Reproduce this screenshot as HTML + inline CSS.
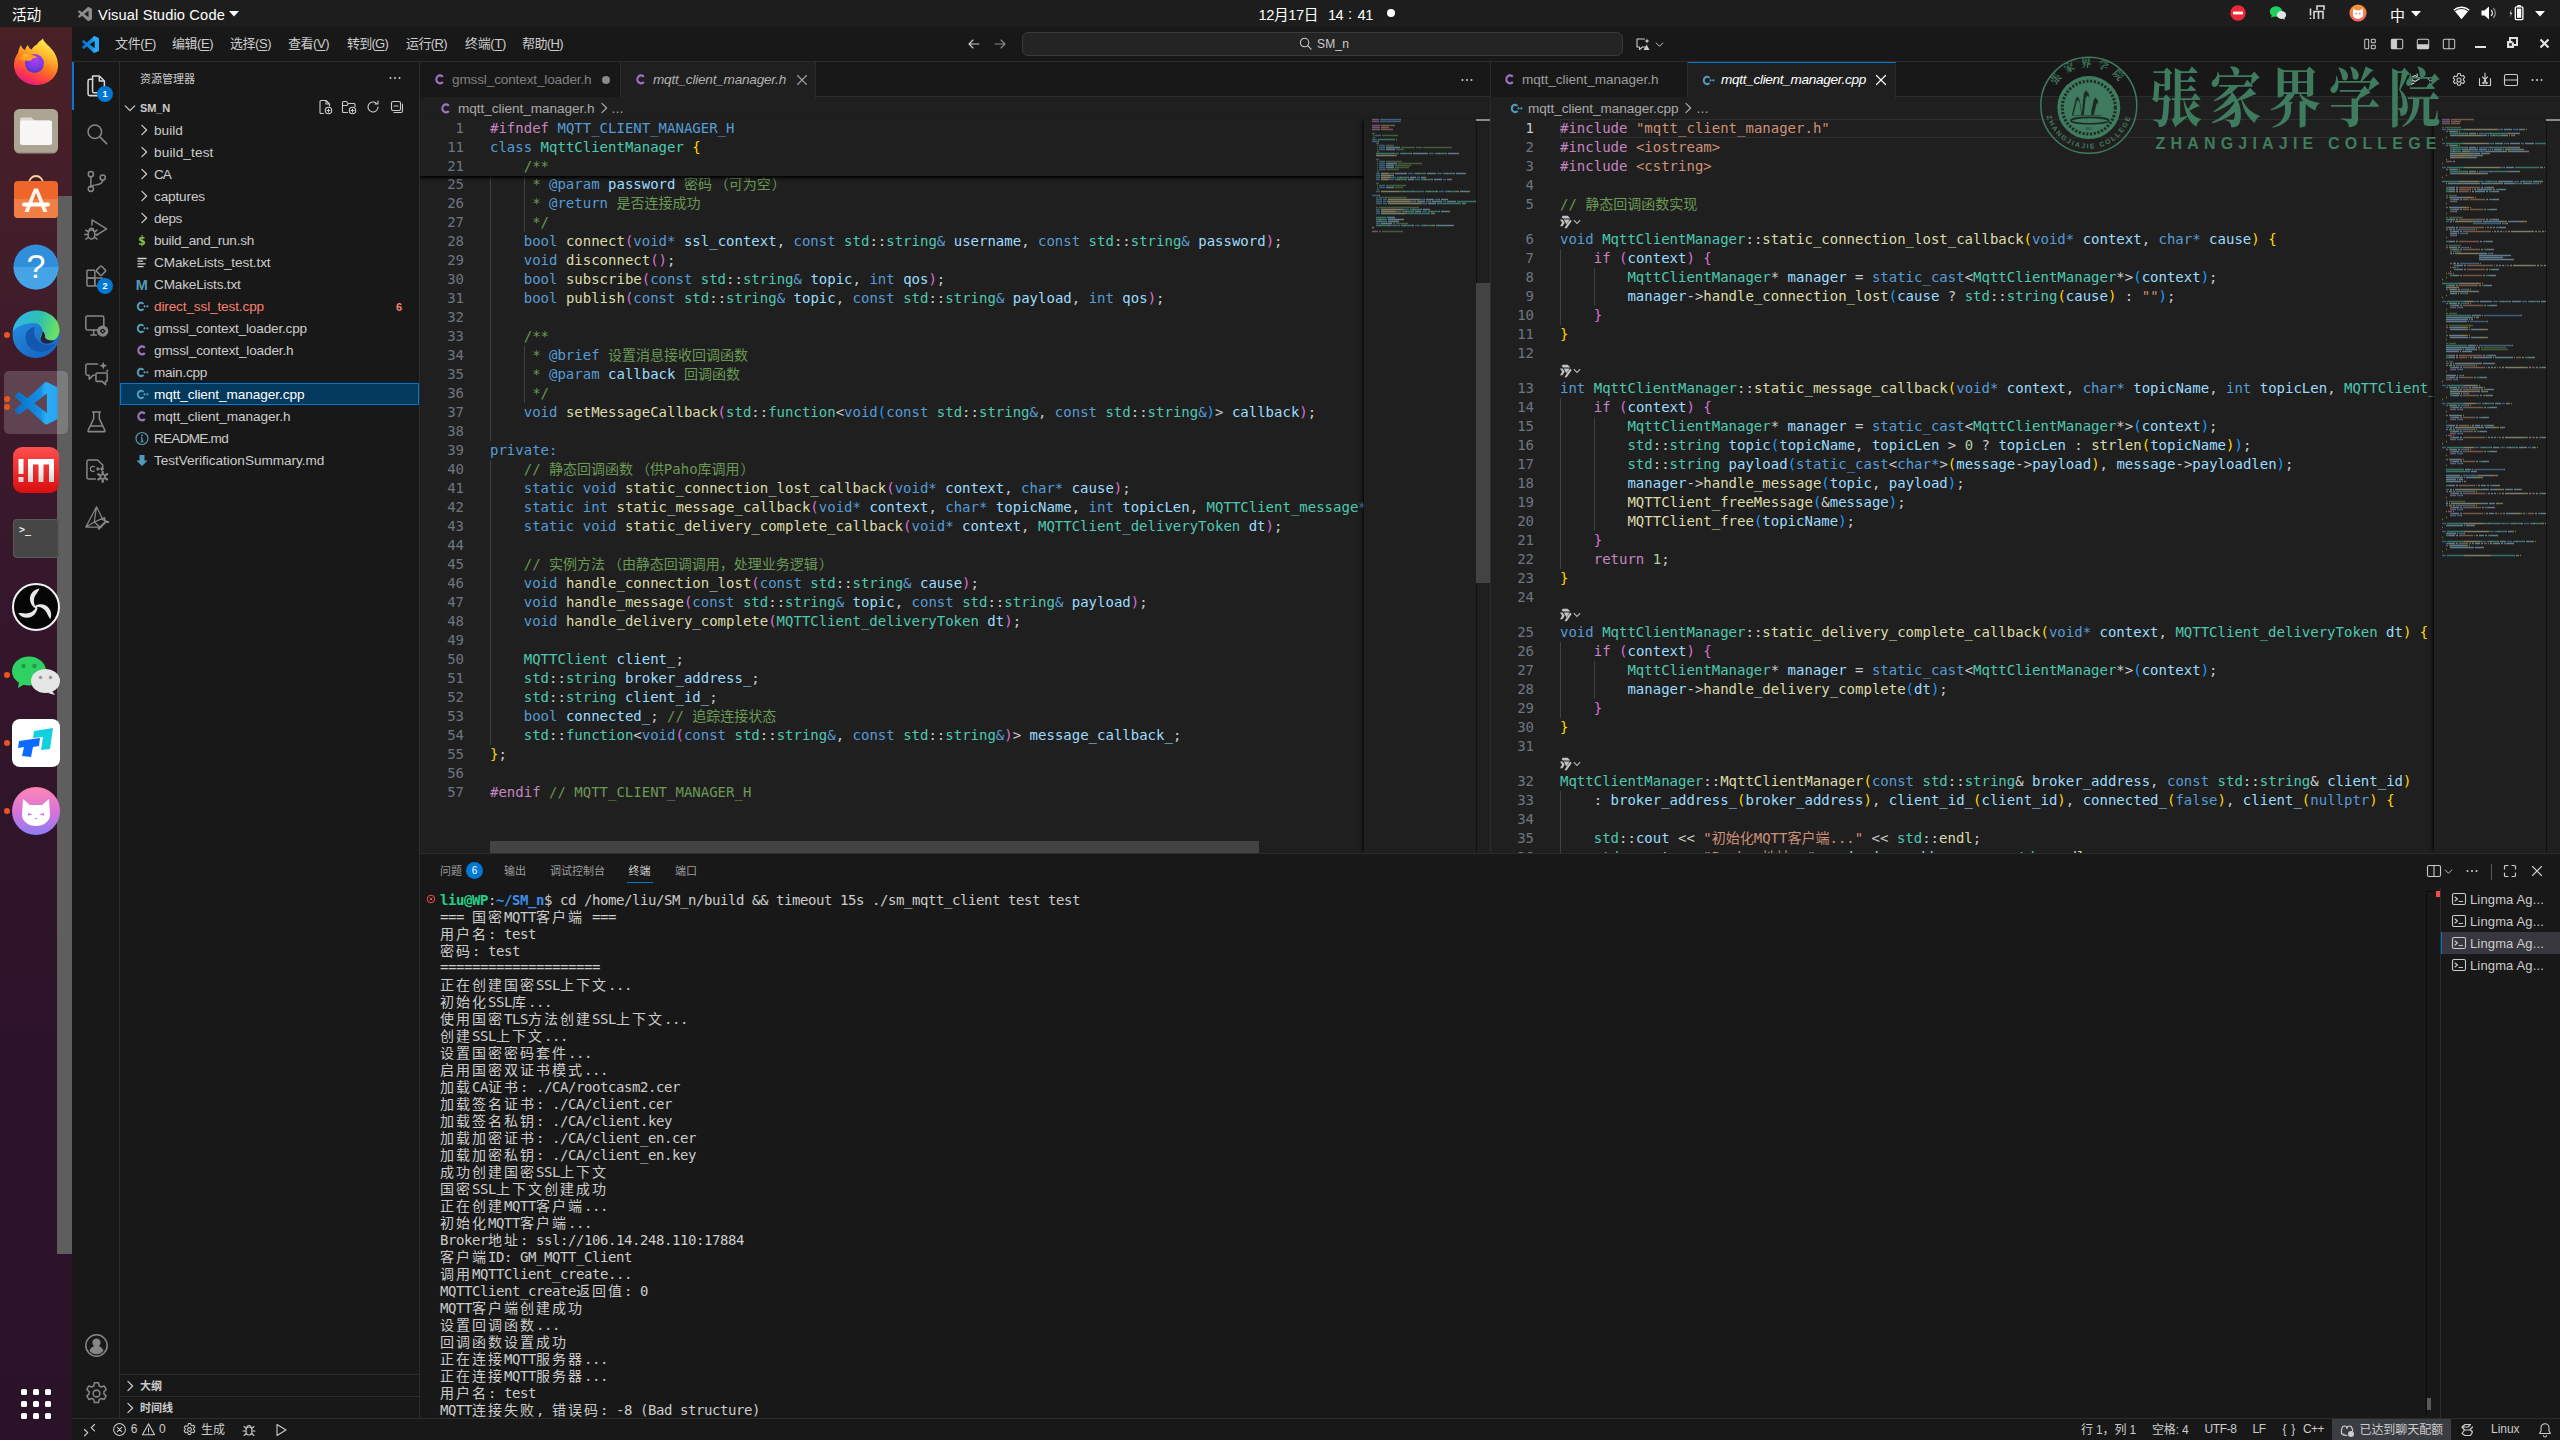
<!DOCTYPE html>
<html lang="zh-CN"><head><meta charset="utf-8"><title>Visual Studio Code</title>
<style>
*{box-sizing:border-box;margin:0;padding:0}
html,body{width:2561px;height:1441px;overflow:hidden;background:#fff}
body{font-family:"Liberation Sans","Noto Sans CJK SC",sans-serif;font-size:13px;color:#ccc;position:relative}
.abs{position:absolute}
#screen{position:absolute;left:0;top:0;width:2560px;height:1440px;background:#181818;overflow:hidden}
#topbar{position:absolute;left:0;top:0;width:2560px;height:27px;background:#1d1d1d;color:#fff;font-size:14.5px}
#topbar .tb{position:absolute;top:1.5px;line-height:27px;white-space:nowrap}
#dock{position:absolute;left:0;top:27px;width:72px;height:1413px;background:linear-gradient(180deg,#482026 0%,#421d2a 17%,#36172b 38%,#2f142a 60%,#2a1229 100%)}
#dockgrey{position:absolute;left:57px;top:169px;width:15px;height:1058px;background:#5e5e5e}
.dk{position:absolute;left:12px;width:48px;height:48px}
.dot{position:absolute;left:4px;width:6px;height:6px;border-radius:50%;background:#e95420}
#vs{position:absolute;left:72px;top:27px;width:2488px;height:1413px;background:#181818}
#title{position:absolute;left:0;top:0;width:2488px;height:35px;border-bottom:1px solid #2b2b2b;background:#181818}
.menu{position:absolute;top:0;line-height:34px;font-size:13px;color:#ccc;white-space:nowrap}
.menu u{text-decoration:underline;text-underline-offset:2px}
#cmd{position:absolute;left:950px;top:5px;width:601px;height:24px;border:1px solid #3a3a3a;border-radius:6px;background:#242424}
#act{position:absolute;left:0;top:35px;width:48px;height:1356px;border-right:1px solid #2b2b2b;background:#181818}
.ai{position:absolute;left:12px;width:24px;height:24px}
.badge{position:absolute;width:16px;height:16px;border-radius:8px;background:#0078d4;color:#fff;font-size:9px;font-weight:bold;text-align:center;line-height:16px}
#side{position:absolute;left:48px;top:35px;width:300px;height:1356px;border-right:1px solid #2b2b2b;background:#181818}
.row{position:absolute;left:0;width:299px;height:22px;line-height:22px;white-space:nowrap;font-size:13px;color:#ccc;letter-spacing:.25px}
.row .lbl{position:absolute;top:1px}
.row .ic{position:absolute;top:3px;width:16px;height:16px}
.mono{font-family:"DejaVu Sans Mono","Noto Sans CJK SC",monospace}
.ed{position:absolute;background:#1f1f1f;overflow:hidden}
.tabs{position:absolute;left:0;top:0;height:35px;background:#181818;border-bottom:1px solid #2b2b2b}
.tab{position:absolute;top:0;height:35px;border-right:1px solid #2b2b2b;line-height:36px;font-size:13px;white-space:nowrap;letter-spacing:.25px}
.tab.act{background:#1f1f1f;height:36px}
.bc{position:absolute;left:0;top:35px;height:22px;line-height:24px;font-size:13px;color:#a9a9a9;white-space:nowrap;letter-spacing:.25px}
.code{position:absolute;font-family:"DejaVu Sans Mono","Noto Sans CJK SC",monospace;font-size:14px;line-height:19px;white-space:pre;color:#ccc}
.ln{position:absolute;left:0;height:19px;white-space:pre}
.num{position:absolute;text-align:right;color:#6e7681;font-family:"DejaVu Sans Mono",monospace;font-size:14px;line-height:19px;height:19px}
.k{color:#569cd6}.c{color:#c586c0}.t{color:#4ec9b0}.f{color:#dcdcaa}.v{color:#9cdcfe}.s{color:#ce9178}.m{color:#6a9955}.n{color:#b5cea8}
.b0{color:#ffd700}.b1{color:#da70d6}.b2{color:#179fff}
.cj{font-family:"Noto Sans CJK SC",sans-serif}
.fwl{display:inline-block;width:16.86px;text-align:right}.fwr{display:inline-block;width:16.86px;padding-left:1px;text-align:left}
.guide{position:absolute;width:1px;background:#404040}
#panel{position:absolute;left:348px;top:826px;width:2140px;height:565px;background:#181818;border-top:1px solid #2b2b2b}
.pt{position:absolute;top:0;height:35px;line-height:35px;font-size:11px;color:#9d9d9d;white-space:nowrap}
.term{position:absolute;left:20px;font-family:"DejaVu Sans Mono","Noto Sans CJK SC",monospace;font-size:14px;line-height:17px;height:17px;white-space:pre;color:#ccc;letter-spacing:-0.43px}
.term .cj{letter-spacing:2px;font-family:"Noto Sans CJK SC",sans-serif}
#status{position:absolute;left:0;top:1391px;width:2488px;height:22px;border-top:1px solid #2b2b2b;background:#181818;font-size:12px;color:#ccc}
#status .s{position:absolute;top:0;line-height:21px;white-space:nowrap;color:#ccc}
svg{display:block;overflow:visible}
</style></head>
<body><div id="screen">
<div id="topbar">
<div class="tb" style="left:12px;font-size:14.67px;letter-spacing:-0.164px;">活动</div>
<svg class="abs" style="left:77.500px;top:6.500px" width="14" height="14" viewBox="0 0 24 24"><path fill="#8c8c8c" d="M23.15 2.587L18.21.21a1.494 1.494 0 0 0-1.705.29l-9.46 8.63-4.12-3.128a.999.999 0 0 0-1.276.057L.327 7.261A1 1 0 0 0 .326 8.74L3.899 12 .326 15.260a1 1 0 0 0 .001 1.479L1.650 17.940a.999.999 0 0 0 1.276.057l4.120-3.128 9.460 8.630a1.492 1.492 0 0 0 1.704.290l4.942-2.377A1.500 1.500 0 0 0 24 20.060V3.939a1.500 1.500 0 0 0-.850-1.352zm-5.146 14.861L10.826 12l7.178-5.448v10.896z"/></svg>
<div class="tb" style="left:98px;font-size:14.67px;letter-spacing:0.144px;">Visual Studio Code</div>
<svg class="abs" style="left:229px;top:11px" width="10" height="6"><path fill="#fff" d="M0 0h10L5 5.5z"/></svg>
<div class="tb" style="left:1258.500px;font-size:14.67px;letter-spacing:-0.404px;">12月17日</div>
<div class="tb" style="left:1328px;font-size:14.67px;letter-spacing:-0.656px;">14</div>
<div class="tb" style="left:1348px;top:0.5px;font-size:14.67px">:</div>
<div class="tb" style="left:1357.500px;font-size:14.67px;letter-spacing:-0.406px;">41</div>
<div class="abs" style="left:1387px;top:9px;width:8px;height:8px;border-radius:50%;background:#fff"></div>
<svg class="abs" style="left:2230px;top:5px" width="16" height="16"><circle cx="8" cy="8" r="7.7" fill="#ed2939"/><rect x="3" y="6.6" width="10" height="2.8" fill="#fff"/></svg>
<svg class="abs" style="left:2269px;top:5px" width="18" height="16"><ellipse cx="7" cy="6.5" rx="6.2" ry="5.3" fill="#1fd15c"/><path d="M3 10l-1 3 3.5-2z" fill="#1fd15c"/><ellipse cx="12.5" cy="10" rx="4.6" ry="3.9" fill="#e4e4e4"/><path d="M15 12.5l1.2 2.3-3-1.2z" fill="#e4e4e4"/></svg>
<svg class="abs" style="left:2309px;top:5px" width="18" height="16" fill="none" stroke="#d8d8d8" stroke-width="1.6"><path d="M1.5 3.5v7M1.5 12.5v1.6" /><path d="M5 14V6.5h9V14M9.5 6.5V14M8 5V1h7v4" /></svg>
<svg class="abs" style="left:2349px;top:4px" width="18" height="18"><defs><linearGradient id="cg" x1="0" y1="0" x2="0" y2="1"><stop offset="0" stop-color="#f79a2c"/><stop offset="1" stop-color="#f2606a"/></linearGradient></defs><circle cx="9" cy="9" r="8.6" fill="url(#cg)"/><path d="M4.2 4.2l2.6 2h4.4l2.6-2 .4 6.2a5.2 4.4 0 0 1-10.4 0z" fill="#fff"/><circle cx="7.2" cy="9.6" r=".8" fill="#f2606a"/><circle cx="10.8" cy="9.6" r=".8" fill="#f2606a"/></svg>
<div class="tb" style="left:2390px;font-size:15px">中</div>
<svg class="abs" style="left:2411px;top:11px" width="10" height="6"><path fill="#fff" d="M0 0h10L5 5.5z"/></svg>
<svg class="abs" style="left:2453px;top:6px" width="17" height="14"><path fill="#fff" d="M8.5 13.2L.4 3.6a12.5 12.5 0 0 1 16.2 0z"/><path fill="none" stroke="#1d1d1d" stroke-width="1.1" d="M1.8 4.9a10.5 10.5 0 0 1 13.4 0"/></svg>
<svg class="abs" style="left:2481px;top:6px" width="17" height="14"><path fill="#fff" d="M.5 4.5h3L8 .6v12.8L3.5 9.5h-3z"/><path fill="none" stroke="#fff" stroke-width="1.2" d="M10.2 4.2a4 4 0 0 1 0 5.6"/><path fill="none" stroke="#9a9a9a" stroke-width="1.2" d="M12.4 2.2a7 7 0 0 1 0 9.6"/></svg>
<svg class="abs" style="left:2509px;top:4px" width="16" height="18"><path fill="#c9c9c9" d="M2.4 5.2L.6 10h1.3l-.7 3.6L3.4 8.4H2z"/><rect x="6.3" y="2.8" width="7.6" height="12.8" rx="1.2" fill="none" stroke="#fff" stroke-width="1.3"/><rect x="8.4" y="1" width="3.4" height="1.6" fill="#fff"/><rect x="8" y="4.6" width="4.2" height="9.2" fill="#fff"/></svg>
<svg class="abs" style="left:2535px;top:11px" width="10" height="6"><path fill="#fff" d="M0 0h10L5 5.5z"/></svg>
</div>
<div id="dock"><div id="dockgrey"></div>
<svg class="dk" style="top:11px" viewBox="0 0 48 48"><defs><linearGradient id="ff1" x1=".75" y1="0" x2=".3" y2="1"><stop offset="0" stop-color="#fff25a"/><stop offset=".3" stop-color="#ffbd2e"/><stop offset=".55" stop-color="#ff7a1f"/><stop offset=".8" stop-color="#ff3b4a"/><stop offset="1" stop-color="#e31587"/></linearGradient><radialGradient id="ff2" cx=".55" cy=".3" r=".75"><stop offset="0" stop-color="#b03df0"/><stop offset=".6" stop-color="#7a3ae0"/><stop offset="1" stop-color="#4a35c8"/></radialGradient></defs><path fill="url(#ff1)" d="M31 .5c1 4 5 6 8 10 4 4 7 10 7 17 0 11-9.500 19.500-21.500 19.500S2 38.500 2 27c0-5 1.500-9 4-12 .5-3 1.500-6 3-8 .5 2.500 2 4 4 5 .5-2 1.500-4 3-5 .5 2 1.500 3.500 3.500 4.500 2-3 4-4.500 5.500-5C26 4 29 2.500 31 .5z"/><circle cx="22.500" cy="25.500" r="9.500" fill="url(#ff2)"/><path fill="#ff9f1f" d="M7 21c3-4 10-5.500 15-3.500 1.500.5 3 1.500 3.500 2.500-3-.5-5.500.5-6.500 2.500-4 .5-8 0-12-1.500z"/><path fill="#ffb52e" d="M10 17c2-1 5-1.500 8-1-2 1-3 2-3.500 3.500-1.500-.5-3-1.500-4.500-2.500z"/></svg>
<svg class="dk" style="top:80px" viewBox="0 0 48 48"><rect x="2" y="2.500" width="44" height="44" rx="5.500" fill="#9a9283"/><rect x="2" y="2" width="44" height="43" rx="5.500" fill="#ada594"/><path d="M8 12.500a2 2 0 0 1 2-2h9.500l3 3H38a2 2 0 0 1 2 2V24H8z" fill="#dedad2"/><rect x="8" y="13.500" width="32" height="24.500" rx="2.500" fill="#f9f7f5"/></svg>
<svg class="dk" style="top:147px" viewBox="0 0 48 48"><path d="M17 9.500a7 7.500 0 0 1 14 0" fill="none" stroke="#f6d3a6" stroke-width="1.800"/><rect x="2" y="7" width="44" height="37" rx="4" fill="#ef662a"/><path d="M2 25h44v15a4 4 0 0 1-4 4H6a4 4 0 0 1-4-4z" fill="#f07e47"/><path d="M12.500 38L22 14.500h4L35.500 38h-4.200L24 19 16.700 38z" fill="#fdf3ee"/><rect x="10" y="28.500" width="28" height="4" rx="2" fill="#fff"/></svg>
<svg class="dk" style="top:216px" viewBox="0 0 48 48"><circle cx="24" cy="24" r="22.5" fill="#2f8fdb"/><path d="M1.5 24a22.5 22.5 0 0 0 45 0z" fill="#46a3e6"/><text x="24" y="35" font-family="Liberation Sans,sans-serif" font-size="34" fill="#fff" text-anchor="middle">?</text></svg>
<svg class="dk" style="top:283px" viewBox="0 0 48 48"><defs><linearGradient id="eg1" x1="0" y1=".3" x2="1" y2=".5"><stop offset="0" stop-color="#2eb4ee"/><stop offset=".55" stop-color="#2fc0b0"/><stop offset="1" stop-color="#6fe35c"/></linearGradient><linearGradient id="eg2" x1="0" y1="0" x2=".6" y2="1"><stop offset="0" stop-color="#2a93e4"/><stop offset="1" stop-color="#1668c4"/></linearGradient></defs><circle cx="24" cy="24.500" r="23.500" fill="url(#eg2)"/><path d="M.700 22C2 9.500 12 .500 24.500 .500 37.500 .500 47.500 9.500 47.500 20c0 7-5 11.500-11 11.500-5 0-8.500-2-8.500-4.500 0-1.500 2.500-2.500 2.500-6 0-4.500-4-8-9-8C12.500 13 4 16.500 .700 22z" fill="url(#eg1)"/><path d="M13.500 27c0-5.500 4-9.500 9.500-10-2.500 6 .5 13 6.500 16.500 4.500 2.500 10 2.500 14-.5-4.500 8-14 11-21.500 7.500-5.500-2.500-8.500-8-8.500-13.500z" fill="#1358ae"/><path d="M28.500 27.500c.5-1.500 2-3 2-6.500 2 1.500 3 4 2.500 6.500 1.500 2.500 6 3.500 9.500 2.500-2 3-7 4.500-11 3-2-1-3.500-3-3-5.500z" fill="#2a1f3a"/></svg>
<div class="dot" style="top:305px"></div>
<div class="abs" style="left:4px;top:344px;width:64px;height:63px;border-radius:5px;background:rgba(255,255,255,.18)"></div>
<svg class="abs" style="left:14.500px;top:355px" width="42.500" height="42.500" viewBox="0 0 24 24"><defs><linearGradient id="vg" x1="0" y1="0" x2="1" y2="0"><stop offset="0" stop-color="#0a6fc4"/><stop offset=".6" stop-color="#1590e6"/><stop offset=".72" stop-color="#2badf8"/><stop offset="1" stop-color="#26a5f2"/></linearGradient></defs><path fill="url(#vg)" d="M23.15 2.587L18.21.21a1.494 1.494 0 0 0-1.705.29l-9.46 8.63-4.12-3.128a.999.999 0 0 0-1.276.057L.327 7.261A1 1 0 0 0 .326 8.74L3.899 12 .326 15.260a1 1 0 0 0 .001 1.479L1.650 17.940a.999.999 0 0 0 1.276.057l4.120-3.128 9.460 8.630a1.492 1.492 0 0 0 1.704.290l4.942-2.377A1.500 1.500 0 0 0 24 20.060V3.939a1.500 1.500 0 0 0-.850-1.352zm-5.146 14.861L10.826 12l7.178-5.448v10.896z"/></svg>
<div class="dot" style="top:369px"></div><div class="dot" style="top:377px"></div>
<svg class="dk" style="top:419px" viewBox="0 0 48 48"><defs><linearGradient id="rg" x1="0" y1="0" x2="0" y2="1"><stop offset="0" stop-color="#ff4f4f"/><stop offset="1" stop-color="#d90d0d"/></linearGradient></defs><rect x="1" y="1" width="46" height="46" rx="9" fill="url(#rg)"/><linearGradient id="wg" x1="0" y1="0" x2="0" y2="1"><stop offset=".3" stop-color="#fff"/><stop offset="1" stop-color="#cfcfcf"/></linearGradient><path fill="url(#wg)" d="M6.500 13h5v15h-5zM6.500 31h5v5h-5zM16 13h26v23h-5V18.500h-5.500V36h-5V18.500H21V36h-5z"/></svg>
<svg class="dk" style="top:487px" viewBox="0 0 48 48"><rect x="1" y="5" width="46" height="39" rx="4" fill="#3d3d3d"/><rect x="1.5" y="5.500" width="45" height="38" rx="3.500" fill="#464646" stroke="#5a5a5a"/><text x="7" y="19" font-family="DejaVu Sans Mono,monospace" font-size="10" font-weight="bold" fill="#e8e8e8">&gt;_</text></svg>
<svg class="dk" style="top:556px" viewBox="0 0 48 48"><circle cx="24" cy="24" r="23" fill="#050505" stroke="#f4f4f4" stroke-width="2"/><g fill="#e9e9e9"><path d="M27.500 5.500c-8 1-12 9-8 16 1.500 2.500 4 4 6.500 4.500-5-3.500-5.500-11 -1-16 1-1.500 2-3 2.500-4.500z"/><path d="M27.500 5.500c-8 1-12 9-8 16 1.500 2.500 4 4 6.500 4.500-5-3.500-5.500-11 -1-16 1-1.500 2-3 2.500-4.500z" transform="rotate(120 24 24)"/><path d="M27.500 5.500c-8 1-12 9-8 16 1.500 2.500 4 4 6.500 4.500-5-3.500-5.500-11 -1-16 1-1.500 2-3 2.500-4.500z" transform="rotate(240 24 24)"/></g></svg>
<svg class="dk" style="top:624px" viewBox="0 0 48 48"><ellipse cx="17" cy="20" rx="17" ry="14.500" fill="#2ed162"/><path d="M7 31l-1 6 7-4z" fill="#2ed162"/><circle cx="11.500" cy="15" r="2.200" fill="#1f9a47"/><circle cx="22.500" cy="15" r="2.200" fill="#1f9a47"/><ellipse cx="33.500" cy="30" rx="14.500" ry="12" fill="#e6e6e6"/><path d="M40 40l3 4-7-2z" fill="#e6e6e6"/><circle cx="28.500" cy="26.500" r="1.800" fill="#9b9b9b"/><circle cx="38.500" cy="26.500" r="1.800" fill="#9b9b9b"/></svg>
<div class="dot" style="top:645px"></div>
<svg class="dk" style="top:692px" viewBox="0 0 48 48"><rect width="48" height="48" rx="8" fill="#fff"/><path d="M22 12l19-3-3 21-9 1 2-13-10 1z" fill="#12d0e0"/><path d="M7 22l21-3-1 8-6 1-2 10-9-1 2-9-6 1z" fill="#0a6cff"/></svg>
<div class="dot" style="top:713px"></div>
<svg class="dk" style="top:760px" viewBox="0 0 48 48"><defs><linearGradient id="ct" x1="0" y1="0" x2="0" y2="1"><stop offset="0" stop-color="#ff86b4"/><stop offset=".5" stop-color="#d974d8"/><stop offset="1" stop-color="#8e7bf6"/></linearGradient></defs><circle cx="24" cy="24" r="24" fill="url(#ct)"/><path d="M11 12l7 6h12l7-6 1 16a14 11 0 0 1-28 0z" fill="#fff"/><path d="M16 26l5 1.500-5 1zM32 26l-5 1.500 5 1zM22.500 31h3l-1.500 1.500z" fill="#c96fe0"/></svg>
<div class="dot" style="top:781px"></div>
<svg class="abs" style="left:21px;top:1362px" width="30" height="30"><rect x="0" y="0" width="6" height="6" rx="1.500" fill="#fff"/><rect x="12" y="0" width="6" height="6" rx="1.500" fill="#fff"/><rect x="24" y="0" width="6" height="6" rx="1.500" fill="#fff"/><rect x="0" y="12" width="6" height="6" rx="1.500" fill="#fff"/><rect x="12" y="12" width="6" height="6" rx="1.500" fill="#fff"/><rect x="24" y="12" width="6" height="6" rx="1.500" fill="#fff"/><rect x="0" y="24" width="6" height="6" rx="1.500" fill="#fff"/><rect x="12" y="24" width="6" height="6" rx="1.500" fill="#fff"/><rect x="24" y="24" width="6" height="6" rx="1.500" fill="#fff"/></svg>
</div>
<div id="vs">
<div id="title">
<svg class="abs" style="left:10px;top:9px" width="17" height="17" viewBox="0 0 24 24"><defs><linearGradient id="vg2" x1="0" y1="0" x2="1" y2="0"><stop offset="0" stop-color="#0a6fc4"/><stop offset=".6" stop-color="#1590e6"/><stop offset=".72" stop-color="#2badf8"/><stop offset="1" stop-color="#26a5f2"/></linearGradient></defs><path fill="url(#vg2)" d="M23.15 2.587L18.21.21a1.494 1.494 0 0 0-1.705.29l-9.46 8.63-4.12-3.128a.999.999 0 0 0-1.276.057L.327 7.261A1 1 0 0 0 .326 8.74L3.899 12 .326 15.260a1 1 0 0 0 .001 1.479L1.650 17.940a.999.999 0 0 0 1.276.057l4.120-3.128 9.460 8.630a1.492 1.492 0 0 0 1.704.290l4.942-2.377A1.500 1.500 0 0 0 24 20.060V3.939a1.500 1.500 0 0 0-.850-1.352zm-5.146 14.861L10.826 12l7.178-5.448v10.896z"/></svg>
<div class="menu" style="left:43px;font-size:13px;letter-spacing:-0.322px;">文件(<u>F</u>)</div>
<div class="menu" style="left:100px;font-size:13px;letter-spacing:-0.469px;">编辑(<u>E</u>)</div>
<div class="menu" style="left:158px;font-size:13px;letter-spacing:-0.469px;">选择(<u>S</u>)</div>
<div class="menu" style="left:216px;font-size:13px;letter-spacing:-0.469px;">查看(<u>V</u>)</div>
<div class="menu" style="left:275px;font-size:13px;letter-spacing:-0.756px;">转到(<u>G</u>)</div>
<div class="menu" style="left:334px;font-size:13px;letter-spacing:-0.609px;">运行(<u>R</u>)</div>
<div class="menu" style="left:393px;font-size:13px;letter-spacing:-0.322px;">终端(<u>T</u>)</div>
<div class="menu" style="left:450px;font-size:13px;letter-spacing:-0.609px;">帮助(<u>H</u>)</div>
<svg class="abs" style="left:894px;top:9px" width="16" height="16" viewBox="0 0 16 16" fill="none" stroke="#ccc" stroke-width="1.1" stroke-linecap="round" stroke-linejoin="round" ><path d="M13 8H3M7 4L3 8l4 4"/></svg>
<svg class="abs" style="left:920px;top:9px" width="16" height="16" viewBox="0 0 16 16" fill="none" stroke="#8a8a8a" stroke-width="1.1" stroke-linecap="round" stroke-linejoin="round" ><path d="M3 8h10M9 4l4 4-4 4"/></svg>
<div id="cmd"></div>
<svg class="abs" style="left:1226px;top:9px" width="15" height="15" viewBox="0 0 16 16" fill="none" stroke="#ccc" stroke-width="1.1" stroke-linecap="round" stroke-linejoin="round" ><circle cx="7" cy="7" r="4.500"/><path d="M10.300 10.300L14 14"/></svg>
<div class="menu" style="left:1245px;font-size:12px;font-size:12px;letter-spacing:0.160px;">SM_n</div>
<svg class="abs" style="left:1563px;top:9px" width="16" height="16" viewBox="0 0 16 16" fill="none" stroke="#ccc" stroke-width="1.1" stroke-linecap="round" stroke-linejoin="round" ><path d="M2 3h7.500M2 3v8h2.500v2.500l3-2.500h2"/><path d="M12 2.500l.7 1.800 1.800.7-1.800.7-.7 1.800-.7-1.800-1.800-.7 1.800-.7z" fill="#ccc" stroke="none"/><path d="M11.500 8.500l3 5.500h-6z" fill="#ccc" stroke="none"/></svg>
<svg class="abs" style="left:1582px;top:12px" width="11" height="11" viewBox="0 0 16 16" fill="none" stroke="#ccc" stroke-width="1.4" stroke-linecap="round" stroke-linejoin="round" ><path d="M3.300 5.900l4.700 4.700 4.700-4.700"/></svg>
<svg class="abs" style="left:2291px;top:10px" width="14" height="14" viewBox="0 0 16 16" fill="none" stroke="#ccc" stroke-width="1.15" stroke-linecap="round" stroke-linejoin="round" ><rect x="2" y="2.500" width="4.500" height="11" rx=".8"/><rect x="9.500" y="2.500" width="4.500" height="4" rx=".8"/><rect x="9.500" y="9.500" width="4.500" height="4" rx=".8"/></svg>
<svg class="abs" style="left:2318px;top:10px" width="14" height="14" viewBox="0 0 16 16" fill="none" stroke="#ccc" stroke-width="1.15" stroke-linecap="round" stroke-linejoin="round" ><rect x="1.500" y="2.500" width="13" height="11" rx="1.500"/><path d="M2 3h5.500v10H2z" fill="#ccc"/></svg>
<svg class="abs" style="left:2344px;top:10px" width="14" height="14" viewBox="0 0 16 16" fill="none" stroke="#ccc" stroke-width="1.15" stroke-linecap="round" stroke-linejoin="round" ><rect x="1.500" y="2.500" width="13" height="11" rx="1.500"/><path d="M2 9h12v4H2z" fill="#ccc"/></svg>
<svg class="abs" style="left:2370px;top:10px" width="14" height="14" viewBox="0 0 16 16" fill="none" stroke="#ccc" stroke-width="1.15" stroke-linecap="round" stroke-linejoin="round" ><rect x="1.500" y="2.500" width="13" height="11" rx="1.500"/><path d="M8 2.500v11"/></svg>
<div class="abs" style="left:2403px;top:19px;width:11px;height:2px;background:#e0e0e0"></div>
<svg class="abs" style="left:2434px;top:10px" width="12" height="12" fill="none" stroke="#e0e0e0" stroke-width="2"><path d="M4 4V1h7v7H8"/><rect x="1" y="4" width="7" height="7" stroke="none" fill="#e0e0e0"/><rect x="3.200" y="6.200" width="2.600" height="2.600" fill="#181818" stroke="none"/><rect x="6.500" y="2.500" width="3" height="3" fill="#181818" stroke="none"/></svg>
<svg class="abs" style="left:2467px;top:11px" width="12" height="12" fill="none" stroke="#e6e6e6" stroke-width="2.100"><path d="M1.500 1.500l8 8M9.500 1.500l-8 8"/></svg>
</div>
<div id="act">
<div class="abs" style="left:0;top:0;width:2px;height:48px;background:#0078d4"></div>
<svg class="abs" style="left:10.5px;top:9.5px" width="27" height="27" viewBox="0 0 24 24" fill="none" stroke="#d7d7d7" stroke-width="1.35" stroke-linecap="round" stroke-linejoin="round" ><path d="M8.500 3.500h6l4.500 4.500v9a1.500 1.500 0 0 1-1.500 1.500H10a1.500 1.500 0 0 1-1.500-1.500zM14.500 3.500V8H19"/><path d="M8.500 6.500H6A1.500 1.500 0 0 0 4.500 8v11.500A1.500 1.500 0 0 0 6 21h8a1.500 1.500 0 0 0 1.500-1.500v-1"/></svg>
<svg class="abs" style="left:10.5px;top:57.5px" width="27" height="27" viewBox="0 0 24 24" fill="none" stroke="#868686" stroke-width="1.35" stroke-linecap="round" stroke-linejoin="round" ><circle cx="10.500" cy="10.500" r="6"/><path d="M15 15l6 6"/></svg>
<svg class="abs" style="left:10.5px;top:105.5px" width="27" height="27" viewBox="0 0 24 24" fill="none" stroke="#868686" stroke-width="1.35" stroke-linecap="round" stroke-linejoin="round" ><circle cx="7" cy="5.500" r="2.300"/><circle cx="7" cy="18.500" r="2.300"/><circle cx="17.500" cy="8.500" r="2.300"/><path d="M7 7.800v8.400M17.500 10.800c0 3-3 3.700-6 4.200-2.500.4-4.500 1-4.500 2"/></svg>
<svg class="abs" style="left:10.5px;top:153.5px" width="27" height="27" viewBox="0 0 24 24" fill="none" stroke="#868686" stroke-width="1.35" stroke-linecap="round" stroke-linejoin="round" ><path d="M8 8V3.500l13 8-9 5.500"/><ellipse cx="7.500" cy="16.500" rx="3" ry="4"/><path d="M5.500 13a2 2 0 0 1 4 0M4.500 16.500h-3M4.800 14L2.500 12.500M4.800 19l-2.300 1.500M10.500 16.500h3M10.200 14l2.300-1.500M10.200 19l2.300 1.500"/></svg>
<svg class="abs" style="left:10.5px;top:201.5px" width="27" height="27" viewBox="0 0 24 24" fill="none" stroke="#868686" stroke-width="1.35" stroke-linecap="round" stroke-linejoin="round" ><rect x="3.500" y="5.500" width="7" height="7" rx=".8"/><rect x="3.500" y="12.500" width="7" height="7" rx=".8"/><rect x="10.500" y="12.500" width="7" height="7" rx=".8"/><rect x="12.800" y="2.800" width="6.400" height="6.400" rx=".8" transform="rotate(45 16 6)"/></svg>
<svg class="abs" style="left:10.5px;top:249.5px" width="27" height="27" viewBox="0 0 24 24" fill="none" stroke="#868686" stroke-width="1.35" stroke-linecap="round" stroke-linejoin="round" ><rect x="2.500" y="3.500" width="16" height="12.500" rx="1.500"/><path d="M7 20.500h5M9.500 16v4.500"/><circle cx="17.500" cy="17" r="5" fill="#868686" stroke="none"/><path d="M15.500 17l1.500-1.500M15.500 17l1.500 1.500M19.500 17L18 15.500M19.500 17L18 18.500" stroke="#181818" stroke-width="1.200"/></svg>
<svg class="abs" style="left:10.5px;top:297.5px" width="27" height="27" viewBox="0 0 24 24" fill="none" stroke="#868686" stroke-width="1.35" stroke-linecap="round" stroke-linejoin="round" ><path d="M13 3.500H4A1.500 1.500 0 0 0 2.500 5v7A1.500 1.500 0 0 0 4 13.500h1.500v3.500l3.500-3.500h1"/><path d="M12.500 11.500h8a1 1 0 0 1 1 1v5.500a1 1 0 0 1-1 1H20v3l-3-3h-4.500a1 1 0 0 1-1-1v-5.500a1 1 0 0 1 1-1z"/><path d="M18 1.500l1 2.500 2.500 1-2.500 1-1 2.500-1-2.500-2.500-1 2.500-1z" fill="#868686" stroke="none"/><path d="M21.500 8l.5 1.300 1.300.5-1.300.5-.5 1.300-.5-1.300-1.300-.5 1.300-.5z" fill="#868686" stroke="none"/></svg>
<svg class="abs" style="left:10.5px;top:345.5px" width="27" height="27" viewBox="0 0 24 24" fill="none" stroke="#868686" stroke-width="1.35" stroke-linecap="round" stroke-linejoin="round" ><path d="M8.500 3.500h7M9.500 3.500v6L4.500 20a.7.700 0 0 0 .6 1h13.800a.7.700 0 0 0 .6-1L14.500 9.500v-6M6.500 16h11"/></svg>
<svg class="abs" style="left:10.5px;top:393.5px" width="27" height="27" viewBox="0 0 24 24" fill="none" stroke="#868686" stroke-width="1.35" stroke-linecap="round" stroke-linejoin="round" ><path d="M11 20.500H5A1.500 1.500 0 0 1 3.500 19V5A1.500 1.500 0 0 1 5 3.500h8l4.500 4.500v4"/><path d="M10 9.500a2.300 2.300 0 1 0 0 4M12 11.500h2.500M13.200 10.300v2.400M15.500 11.500H18M16.700 10.300v2.400" stroke-width="1.200"/><circle cx="17.500" cy="18.500" r="2" /><path d="M17.500 14v1.500M17.500 21.500V23M13.600 16.200l1.300.8M20.100 20l1.300.8M13.600 20.800l1.300-.8M20.100 17l1.300-.8" stroke-width="2"/></svg>
<svg class="abs" style="left:10.5px;top:441.5px" width="27" height="27" viewBox="0 0 24 24" fill="none" stroke="#868686" stroke-width="1.35" stroke-linecap="round" stroke-linejoin="round" ><path d="M12 2.500L2.500 20.500h14M12 2.500l6 12M12 2.500l-2 13.500 8-3.500M2.500 20.500L10 16l5 4.500" stroke-width="1.100"/><path d="M14 22l6-6M19 12.500a3 3 0 0 0 3.500 3.500" stroke-width="1.800"/></svg>
<svg class="abs" style="left:10.5px;top:1269.5px" width="27" height="27" viewBox="0 0 24 24" fill="none" stroke="#868686" stroke-width="1.35" stroke-linecap="round" stroke-linejoin="round" ><circle cx="12" cy="12" r="9.500"/><circle cx="12" cy="9.500" r="3" fill="#868686"/><path d="M6.500 16.500a6 6 0 0 1 11 0 7 7 0 0 1-11 0z" fill="#868686"/></svg>
<svg class="abs" style="left:10.5px;top:1317.5px" width="27" height="27" viewBox="0 0 24 24" fill="none" stroke="#868686" stroke-width="1.35" stroke-linecap="round" stroke-linejoin="round" ><circle cx="12" cy="12" r="3"/><path d="M10.200 2.500h3.600l.6 2.700 1.800 1 2.600-.9 1.800 3.100-2 1.900v2l2 1.900-1.800 3.100-2.600-.9-1.800 1-.6 2.700h-3.600l-.6-2.700-1.800-1-2.600.9-1.800-3.100 2-1.900v-2l-2-1.900 1.800-3.100 2.600.9 1.800-1z"/></svg>
<div class="badge" style="left:25px;top:24px">1</div>
<div class="badge" style="left:25px;top:216px">2</div>
</div>
<div id="side">
<div class="abs" style="left:20px;top:0px;line-height:35px;font-size:11px;color:#ccc;font-size:11px;letter-spacing:0.000px;">资源管理器</div>
<svg class="abs" style="left:267px;top:8px" width="16" height="16" viewBox="0 0 16 16" fill="none" stroke="#ccc" stroke-width="1" stroke-linecap="round" stroke-linejoin="round" color="#ccc"><circle cx="3.500" cy="8" r="1" fill="currentColor" stroke="none"/><circle cx="8" cy="8" r="1" fill="currentColor" stroke="none"/><circle cx="12.500" cy="8" r="1" fill="currentColor" stroke="none"/></svg>
<svg class="abs" style="left:2px;top:38px" width="16" height="16" viewBox="0 0 16 16" fill="none" stroke="#ccc" stroke-width="1.2" stroke-linecap="round" stroke-linejoin="round" ><path d="M3.300 5.900l4.700 4.700 4.700-4.700"/></svg>
<div class="abs" style="left:20px;top:35px;line-height:22px;font-size:11px;font-weight:bold;color:#ccc;font-size:11px;letter-spacing:-0.141px;">SM_N</div>
<svg class="abs" style="left:197px;top:37px" width="16" height="16" viewBox="0 0 16 16" fill="none" stroke="#ccc" stroke-width="1.1" stroke-linecap="round" stroke-linejoin="round" ><path d="M9 1.500H4a1 1 0 0 0-1 1v11a1 1 0 0 0 1 1h2.500M9 1.500v3.500h3.500M9 1.500l3.500 3.500v2"/><circle cx="11.500" cy="11.500" r="3.200"/><path d="M11.500 10v3M10 11.500h3"/></svg>
<svg class="abs" style="left:221px;top:37px" width="16" height="16" viewBox="0 0 16 16" fill="none" stroke="#ccc" stroke-width="1.1" stroke-linecap="round" stroke-linejoin="round" ><path d="M6.500 13.500h-4a1 1 0 0 1-1-1v-9a1 1 0 0 1 1-1h3l1.500 2h6a1 1 0 0 1 1 1v2M1.500 6.500h4.500l1.500-2"/><circle cx="11.500" cy="11.500" r="3.200"/><path d="M11.500 10v3M10 11.500h3"/></svg>
<svg class="abs" style="left:245px;top:37px" width="16" height="16" viewBox="0 0 16 16" fill="none" stroke="#ccc" stroke-width="1.1" stroke-linecap="round" stroke-linejoin="round" ><path d="M13 8a5 5 0 1 1-1.600-3.700M13 2v3h-3"/></svg>
<svg class="abs" style="left:269px;top:37px" width="16" height="16" viewBox="0 0 16 16" fill="none" stroke="#ccc" stroke-width="1.1" stroke-linecap="round" stroke-linejoin="round" ><rect x="2.500" y="2.500" width="9" height="9" rx="1.500"/><path d="M5 7h4M13.500 5v7a1.500 1.500 0 0 1-1.500 1.500H5"/></svg>
<div class="row" style="top:57px;">
<svg class="abs" style="left:16px;top:3px" width="16" height="16" viewBox="0 0 16 16" fill="none" stroke="#ccc" stroke-width="1.2" stroke-linecap="round" stroke-linejoin="round" ><path d="M5.900 3.300l4.700 4.700-4.700 4.700"/></svg>
<span class="lbl" style="left:34px;color:#ccc;font-size:13.6px;letter-spacing:0.053px;">build</span>
</div>
<div class="row" style="top:79px;">
<svg class="abs" style="left:16px;top:3px" width="16" height="16" viewBox="0 0 16 16" fill="none" stroke="#ccc" stroke-width="1.2" stroke-linecap="round" stroke-linejoin="round" ><path d="M5.900 3.300l4.700 4.700-4.700 4.700"/></svg>
<span class="lbl" style="left:34px;color:#ccc;font-size:13.6px;letter-spacing:0.130px;">build_test</span>
</div>
<div class="row" style="top:101px;">
<svg class="abs" style="left:16px;top:3px" width="16" height="16" viewBox="0 0 16 16" fill="none" stroke="#ccc" stroke-width="1.2" stroke-linecap="round" stroke-linejoin="round" ><path d="M5.900 3.300l4.700 4.700-4.700 4.700"/></svg>
<span class="lbl" style="left:34px;color:#ccc;font-size:13.6px;letter-spacing:-0.945px;">CA</span>
</div>
<div class="row" style="top:123px;">
<svg class="abs" style="left:16px;top:3px" width="16" height="16" viewBox="0 0 16 16" fill="none" stroke="#ccc" stroke-width="1.2" stroke-linecap="round" stroke-linejoin="round" ><path d="M5.900 3.300l4.700 4.700-4.700 4.700"/></svg>
<span class="lbl" style="left:34px;color:#ccc;font-size:13.6px;letter-spacing:-0.143px;">captures</span>
</div>
<div class="row" style="top:145px;">
<svg class="abs" style="left:16px;top:3px" width="16" height="16" viewBox="0 0 16 16" fill="none" stroke="#ccc" stroke-width="1.2" stroke-linecap="round" stroke-linejoin="round" ><path d="M5.900 3.300l4.700 4.700-4.700 4.700"/></svg>
<span class="lbl" style="left:34px;color:#ccc;font-size:13.6px;letter-spacing:-0.371px;">deps</span>
</div>
<div class="row" style="top:167px;">
<svg class="abs" style="left:14px;top:3px" width="16" height="16" viewBox="0 0 16 16" fill="none" stroke-linecap="butt"><text x="8" y="13" font-size="13" font-weight="bold" font-family="DejaVu Sans Mono,monospace" fill="#8dc149" stroke="none" text-anchor="middle">$</text></svg>
<span class="lbl" style="left:34px;color:#ccc;font-size:13.6px;letter-spacing:-0.270px;">build_and_run.sh</span>
</div>
<div class="row" style="top:189px;">
<svg class="abs" style="left:14px;top:3px" width="16" height="16" viewBox="0 0 16 16" fill="none" stroke-linecap="butt"><path d="M3.500 4.500h9M3.500 7.200h5.500M3.500 9.900h8M3.500 12.600h6" stroke="#d4d7d6" stroke-width="1.300"/></svg>
<span class="lbl" style="left:34px;color:#ccc;font-size:13.6px;letter-spacing:-0.111px;">CMakeLists_test.txt</span>
</div>
<div class="row" style="top:211px;">
<svg class="abs" style="left:14px;top:3px" width="16" height="16" viewBox="0 0 16 16" fill="none" stroke-linecap="butt"><text x="8" y="13.500" font-size="14.500" font-weight="bold" font-family="Liberation Sans,sans-serif" fill="#519aba" stroke="none" text-anchor="middle">M</text></svg>
<span class="lbl" style="left:34px;color:#ccc;font-size:13.6px;letter-spacing:-0.174px;">CMakeLists.txt</span>
</div>
<div class="row" style="top:233px;">
<svg class="abs" style="left:14px;top:3px" width="16" height="16" viewBox="0 0 16 16" fill="none" stroke-linecap="butt"><path d="M9.450 6A3.200 3.700 0 1 0 9.450 10.800" stroke="#519aba" stroke-width="2.100"/><path d="M9.300 8.300h2.400M10.500 7.100v2.400M12.100 8.300h2.400M13.300 7.100v2.400" stroke="#519aba" stroke-width="1"/></svg>
<span class="lbl" style="left:34px;color:#f88070;font-size:13.6px;letter-spacing:-0.137px;">direct_ssl_test.cpp</span>
<span class="lbl" style="left:276px;color:#f88070;font-size:11px;font-weight:bold">6</span>
</div>
<div class="row" style="top:255px;">
<svg class="abs" style="left:14px;top:3px" width="16" height="16" viewBox="0 0 16 16" fill="none" stroke-linecap="butt"><path d="M9.450 6A3.200 3.700 0 1 0 9.450 10.800" stroke="#519aba" stroke-width="2.100"/><path d="M9.300 8.300h2.400M10.500 7.100v2.400M12.100 8.300h2.400M13.300 7.100v2.400" stroke="#519aba" stroke-width="1"/></svg>
<span class="lbl" style="left:34px;color:#ccc;font-size:13.6px;letter-spacing:-0.174px;">gmssl_context_loader.cpp</span>
</div>
<div class="row" style="top:277px;">
<svg class="abs" style="left:14px;top:3px" width="16" height="16" viewBox="0 0 16 16" fill="none" stroke-linecap="butt"><path d="M10.760 5.830A3.600 4 0 1 0 10.760 10.970" stroke="#a074c4" stroke-width="2.200"/></svg>
<span class="lbl" style="left:34px;color:#ccc;font-size:13.6px;letter-spacing:-0.151px;">gmssl_context_loader.h</span>
</div>
<div class="row" style="top:299px;">
<svg class="abs" style="left:14px;top:3px" width="16" height="16" viewBox="0 0 16 16" fill="none" stroke-linecap="butt"><path d="M9.450 6A3.200 3.700 0 1 0 9.450 10.800" stroke="#519aba" stroke-width="2.100"/><path d="M9.300 8.300h2.400M10.500 7.100v2.400M12.100 8.300h2.400M13.300 7.100v2.400" stroke="#519aba" stroke-width="1"/></svg>
<span class="lbl" style="left:34px;color:#ccc;font-size:13.6px;letter-spacing:-0.271px;">main.cpp</span>
</div>
<div class="row" style="top:321px;background:#04395e;outline:1px solid #0078d4;outline-offset:-1px;">
<svg class="abs" style="left:14px;top:3px" width="16" height="16" viewBox="0 0 16 16" fill="none" stroke-linecap="butt"><path d="M9.450 6A3.200 3.700 0 1 0 9.450 10.800" stroke="#519aba" stroke-width="2.100"/><path d="M9.300 8.300h2.400M10.500 7.100v2.400M12.100 8.300h2.400M13.300 7.100v2.400" stroke="#519aba" stroke-width="1"/></svg>
<span class="lbl" style="left:34px;color:#fff;font-size:13.6px;letter-spacing:-0.060px;">mqtt_client_manager.cpp</span>
</div>
<div class="row" style="top:343px;">
<svg class="abs" style="left:14px;top:3px" width="16" height="16" viewBox="0 0 16 16" fill="none" stroke-linecap="butt"><path d="M10.760 5.830A3.600 4 0 1 0 10.760 10.970" stroke="#a074c4" stroke-width="2.200"/></svg>
<span class="lbl" style="left:34px;color:#ccc;font-size:13.6px;letter-spacing:-0.049px;">mqtt_client_manager.h</span>
</div>
<div class="row" style="top:365px;">
<svg class="abs" style="left:14px;top:3px" width="16" height="16" viewBox="0 0 16 16" fill="none" stroke-linecap="butt"><circle cx="8" cy="8.500" r="6" stroke="#519aba" stroke-width="1.200"/><path d="M8 7.700v3.800M6.900 7.700H8M6.600 11.600h2.900" stroke="#519aba" stroke-width="1.300"/><circle cx="8" cy="5.400" r=".9" fill="#519aba" stroke="none"/></svg>
<span class="lbl" style="left:34px;color:#ccc;font-size:13.6px;letter-spacing:-0.759px;">README.md</span>
</div>
<div class="row" style="top:387px;">
<svg class="abs" style="left:14px;top:3px" width="16" height="16" viewBox="0 0 16 16" fill="none" stroke-linecap="butt"><path d="M5.500 3h5v5.500h3L8 14 2.500 8.500h3z" fill="#519aba" stroke="none"/></svg>
<span class="lbl" style="left:34px;color:#ccc;font-size:13.6px;letter-spacing:-0.033px;">TestVerificationSummary.md</span>
</div>
<div class="abs" style="left:0;top:1312px;width:299px;height:22px;border-top:1px solid #2b2b2b"></div>
<svg class="abs" style="left:2px;top:1316px" width="16" height="16" viewBox="0 0 16 16" fill="none" stroke="#ccc" stroke-width="1.2" stroke-linecap="round" stroke-linejoin="round" ><path d="M5.900 3.300l4.700 4.700-4.700 4.700"/></svg>
<div class="abs" style="left:20px;top:1313px;line-height:22px;font-size:11px;font-weight:bold;color:#ccc;font-size:11px;letter-spacing:0.000px;">大纲</div>
<div class="abs" style="left:0;top:1334px;width:299px;height:22px;border-top:1px solid #2b2b2b"></div>
<svg class="abs" style="left:2px;top:1338px" width="16" height="16" viewBox="0 0 16 16" fill="none" stroke="#ccc" stroke-width="1.2" stroke-linecap="round" stroke-linejoin="round" ><path d="M5.900 3.300l4.700 4.700-4.700 4.700"/></svg>
<div class="abs" style="left:20px;top:1335px;line-height:22px;font-size:11px;font-weight:bold;color:#ccc;font-size:11px;letter-spacing:0.000px;">时间线</div>
</div>
<div class="ed" style="left:348px;top:35px;width:1070px;height:791px">
<div class="tabs" style="width:1070px"></div>
<div class="tab" style="left:0;width:201px;background:#181818;color:#808080">
<svg class="abs" style="left:12px;top:9px" width="16" height="16" viewBox="0 0 16 16" fill="none" stroke-linecap="butt"><path d="M10.760 5.830A3.600 4 0 1 0 10.760 10.970" stroke="#a074c4" stroke-width="2.200"/></svg>
<span class="abs" style="left:32px;font-size:13.6px;letter-spacing:-0.151px;">gmssl_context_loader.h</span>
<div class="abs" style="left:182px;top:14px;width:8px;height:8px;border-radius:50%;background:#8a8a8a"></div>
</div>
<div class="tab act" style="left:201px;width:195px;color:#b2b2b2">
<svg class="abs" style="left:12px;top:9px" width="16" height="16" viewBox="0 0 16 16" fill="none" stroke-linecap="butt"><path d="M10.760 5.830A3.600 4 0 1 0 10.760 10.970" stroke="#a074c4" stroke-width="2.200"/></svg>
<span class="abs" style="left:32px;font-style:italic;font-size:13.6px;letter-spacing:-0.228px;">mqtt_client_manager.h</span>
<svg class="abs" style="left:173px;top:10px" width="16" height="16" viewBox="0 0 16 16" fill="none" stroke="#a0a0a0" stroke-width="1.1" stroke-linecap="round" stroke-linejoin="round" ><path d="M3.500 3.500l9 9M12.500 3.500l-9 9"/></svg>
</div>
<svg class="abs" style="left:1039px;top:10px" width="16" height="16" viewBox="0 0 16 16" fill="none" stroke="#ccc" stroke-width="1" stroke-linecap="round" stroke-linejoin="round" color="#ccc"><circle cx="3.500" cy="8" r="1" fill="currentColor" stroke="none"/><circle cx="8" cy="8" r="1" fill="currentColor" stroke="none"/><circle cx="12.500" cy="8" r="1" fill="currentColor" stroke="none"/></svg>
<div class="bc" style="width:1070px">
<svg class="abs" style="left:18px;top:3px" width="16" height="16" viewBox="0 0 16 16" fill="none" stroke-linecap="butt"><path d="M10.760 5.830A3.600 4 0 1 0 10.760 10.970" stroke="#a074c4" stroke-width="2.200"/></svg>
<span class="abs" style="left:38px;font-size:13.6px;letter-spacing:-0.049px;">mqtt_client_manager.h</span>
<svg class="abs" style="left:176px;top:3px" width="16" height="16" viewBox="0 0 16 16" fill="none" stroke="#a9a9a9" stroke-width="1.2" stroke-linecap="round" stroke-linejoin="round" ><path d="M5.900 3.300l4.700 4.700-4.700 4.700"/></svg>
<span class="abs" style="left:191px">…</span>
</div>
<div class="abs" style="left:0;top:57px;width:944px;height:734px;overflow:hidden">
<div class="num" style="left:0;top:56px;width:44px">25</div>
<div class="code" style="left:70px;top:56px"><span class="m">     * </span><span class="k">@param</span> <span class="v">password</span><span class="m"> 密码<span class="fwl">（</span>可为空<span class="fwr">）</span></span></div>
<div class="num" style="left:0;top:75px;width:44px">26</div>
<div class="code" style="left:70px;top:75px"><span class="m">     * </span><span class="k">@return</span> <span class="m">是否连接成功</span></div>
<div class="num" style="left:0;top:94px;width:44px">27</div>
<div class="code" style="left:70px;top:94px"><span class="m">     */</span></div>
<div class="num" style="left:0;top:113px;width:44px">28</div>
<div class="code" style="left:70px;top:113px">    <span class="k">bool</span> <span class="f">connect</span><span class="b1">(</span><span class="k">void</span><span class="k">*</span> <span class="v">ssl_context</span>, <span class="k">const</span> <span class="t">std</span>::<span class="t">string</span><span class="k">&amp;</span> <span class="v">username</span>, <span class="k">const</span> <span class="t">std</span>::<span class="t">string</span><span class="k">&amp;</span> <span class="v">password</span><span class="b1">)</span>;</div>
<div class="num" style="left:0;top:132px;width:44px">29</div>
<div class="code" style="left:70px;top:132px">    <span class="k">void</span> <span class="f">disconnect</span><span class="b1">(</span><span class="b1">)</span>;</div>
<div class="num" style="left:0;top:151px;width:44px">30</div>
<div class="code" style="left:70px;top:151px">    <span class="k">bool</span> <span class="f">subscribe</span><span class="b1">(</span><span class="k">const</span> <span class="t">std</span>::<span class="t">string</span><span class="k">&amp;</span> <span class="v">topic</span>, <span class="k">int</span> <span class="v">qos</span><span class="b1">)</span>;</div>
<div class="num" style="left:0;top:170px;width:44px">31</div>
<div class="code" style="left:70px;top:170px">    <span class="k">bool</span> <span class="f">publish</span><span class="b1">(</span><span class="k">const</span> <span class="t">std</span>::<span class="t">string</span><span class="k">&amp;</span> <span class="v">topic</span>, <span class="k">const</span> <span class="t">std</span>::<span class="t">string</span><span class="k">&amp;</span> <span class="v">payload</span>, <span class="k">int</span> <span class="v">qos</span><span class="b1">)</span>;</div>
<div class="num" style="left:0;top:189px;width:44px">32</div>
<div class="code" style="left:70px;top:189px"></div>
<div class="num" style="left:0;top:208px;width:44px">33</div>
<div class="code" style="left:70px;top:208px"><span class="m">    /**</span></div>
<div class="num" style="left:0;top:227px;width:44px">34</div>
<div class="code" style="left:70px;top:227px"><span class="m">     * </span><span class="k">@brief</span> <span class="m">设置消息接收回调函数</span></div>
<div class="num" style="left:0;top:246px;width:44px">35</div>
<div class="code" style="left:70px;top:246px"><span class="m">     * </span><span class="k">@param</span> <span class="v">callback</span><span class="m"> 回调函数</span></div>
<div class="num" style="left:0;top:265px;width:44px">36</div>
<div class="code" style="left:70px;top:265px"><span class="m">     */</span></div>
<div class="num" style="left:0;top:284px;width:44px">37</div>
<div class="code" style="left:70px;top:284px">    <span class="k">void</span> <span class="f">setMessageCallback</span><span class="b1">(</span><span class="t">std</span>::<span class="t">function</span>&lt;<span class="k">void</span><span class="b2">(</span><span class="k">const</span> <span class="t">std</span>::<span class="t">string</span><span class="k">&amp;</span>, <span class="k">const</span> <span class="t">std</span>::<span class="t">string</span><span class="k">&amp;</span><span class="b2">)</span>&gt; <span class="v">callback</span><span class="b1">)</span>;</div>
<div class="num" style="left:0;top:303px;width:44px">38</div>
<div class="code" style="left:70px;top:303px"></div>
<div class="num" style="left:0;top:322px;width:44px">39</div>
<div class="code" style="left:70px;top:322px"><span class="k">private:</span></div>
<div class="num" style="left:0;top:341px;width:44px">40</div>
<div class="code" style="left:70px;top:341px"><span class="m">    // 静态回调函数<span class="fwl">（</span>供Paho库调用<span class="fwr">）</span></span></div>
<div class="num" style="left:0;top:360px;width:44px">41</div>
<div class="code" style="left:70px;top:360px">    <span class="k">static</span> <span class="k">void</span> <span class="f">static_connection_lost_callback</span><span class="b1">(</span><span class="k">void</span><span class="k">*</span> <span class="v">context</span>, <span class="k">char</span><span class="k">*</span> <span class="v">cause</span><span class="b1">)</span>;</div>
<div class="num" style="left:0;top:379px;width:44px">42</div>
<div class="code" style="left:70px;top:379px">    <span class="k">static</span> <span class="k">int</span> <span class="f">static_message_callback</span><span class="b1">(</span><span class="k">void</span><span class="k">*</span> <span class="v">context</span>, <span class="k">char</span><span class="k">*</span> <span class="v">topicName</span>, <span class="k">int</span> <span class="v">topicLen</span>, <span class="t">MQTTClient_message</span><span class="k">*</span> <span class="v">message</span><span class="b1">)</span>;</div>
<div class="num" style="left:0;top:398px;width:44px">43</div>
<div class="code" style="left:70px;top:398px">    <span class="k">static</span> <span class="k">void</span> <span class="f">static_delivery_complete_callback</span><span class="b1">(</span><span class="k">void</span><span class="k">*</span> <span class="v">context</span>, <span class="t">MQTTClient_deliveryToken</span> <span class="v">dt</span><span class="b1">)</span>;</div>
<div class="num" style="left:0;top:417px;width:44px">44</div>
<div class="code" style="left:70px;top:417px"></div>
<div class="num" style="left:0;top:436px;width:44px">45</div>
<div class="code" style="left:70px;top:436px"><span class="m">    // 实例方法<span class="fwl">（</span>由静态回调调用，处理业务逻辑<span class="fwr">）</span></span></div>
<div class="num" style="left:0;top:455px;width:44px">46</div>
<div class="code" style="left:70px;top:455px">    <span class="k">void</span> <span class="f">handle_connection_lost</span><span class="b1">(</span><span class="k">const</span> <span class="t">std</span>::<span class="t">string</span><span class="k">&amp;</span> <span class="v">cause</span><span class="b1">)</span>;</div>
<div class="num" style="left:0;top:474px;width:44px">47</div>
<div class="code" style="left:70px;top:474px">    <span class="k">void</span> <span class="f">handle_message</span><span class="b1">(</span><span class="k">const</span> <span class="t">std</span>::<span class="t">string</span><span class="k">&amp;</span> <span class="v">topic</span>, <span class="k">const</span> <span class="t">std</span>::<span class="t">string</span><span class="k">&amp;</span> <span class="v">payload</span><span class="b1">)</span>;</div>
<div class="num" style="left:0;top:493px;width:44px">48</div>
<div class="code" style="left:70px;top:493px">    <span class="k">void</span> <span class="f">handle_delivery_complete</span><span class="b1">(</span><span class="t">MQTTClient_deliveryToken</span> <span class="v">dt</span><span class="b1">)</span>;</div>
<div class="num" style="left:0;top:512px;width:44px">49</div>
<div class="code" style="left:70px;top:512px"></div>
<div class="num" style="left:0;top:531px;width:44px">50</div>
<div class="code" style="left:70px;top:531px">    <span class="t">MQTTClient</span> <span class="v">client_</span>;</div>
<div class="num" style="left:0;top:550px;width:44px">51</div>
<div class="code" style="left:70px;top:550px">    <span class="t">std</span>::<span class="t">string</span> <span class="v">broker_address_</span>;</div>
<div class="num" style="left:0;top:569px;width:44px">52</div>
<div class="code" style="left:70px;top:569px">    <span class="t">std</span>::<span class="t">string</span> <span class="v">client_id_</span>;</div>
<div class="num" style="left:0;top:588px;width:44px">53</div>
<div class="code" style="left:70px;top:588px">    <span class="k">bool</span> <span class="v">connected_</span>; <span class="m">// 追踪连接状态</span></div>
<div class="num" style="left:0;top:607px;width:44px">54</div>
<div class="code" style="left:70px;top:607px">    <span class="t">std</span>::<span class="t">function</span>&lt;<span class="k">void</span><span class="b1">(</span><span class="k">const</span> <span class="t">std</span>::<span class="t">string</span><span class="k">&amp;</span>, <span class="k">const</span> <span class="t">std</span>::<span class="t">string</span><span class="k">&amp;</span><span class="b1">)</span>&gt; <span class="v">message_callback_</span>;</div>
<div class="num" style="left:0;top:626px;width:44px">55</div>
<div class="code" style="left:70px;top:626px"><span class="b0">}</span>;</div>
<div class="num" style="left:0;top:645px;width:44px">56</div>
<div class="code" style="left:70px;top:645px"></div>
<div class="num" style="left:0;top:664px;width:44px">57</div>
<div class="code" style="left:70px;top:664px"><span class="c">#endif</span> <span class="m">// MQTT_CLIENT_MANAGER_H</span></div>
<div class="guide" style="left:70px;top:56px;height:266px"></div>
<div class="guide" style="left:70px;top:341px;height:285px"></div>
<div class="guide" style="left:104px;top:56px;height:57px"></div>
<div class="guide" style="left:104px;top:227px;height:57px"></div>
</div>
<div class="abs" style="left:0;top:57px;width:944px;height:57px;background:#1f1f1f;box-shadow:0 2px 3px 0 #000"></div>
<div class="num" style="left:0;top:57px;width:44px">1</div>
<div class="code" style="left:70px;top:57px"><span class="c">#ifndef</span> <span class="k">MQTT_CLIENT_MANAGER_H</span></div>
<div class="num" style="left:0;top:76px;width:44px">11</div>
<div class="code" style="left:70px;top:76px"><span class="k">class</span> <span class="t">MqttClientManager</span> <span class="b0">{</span></div>
<div class="num" style="left:0;top:95px;width:44px">21</div>
<div class="code" style="left:70px;top:95px"><span class="m">    /**</span></div>
<div class="abs" style="left:70px;top:779px;width:769px;height:12px;background:#434343"></div>
<div class="abs" style="left:944px;top:57px;width:112px;height:734px;background:#1f1f1f;box-shadow:-3px 0 4px -2px #000"></div>
<svg class="abs" style="left:0;top:0" width="1070" height="791" fill="none" stroke-width="1.300" stroke-opacity=".5"><path stroke="#c586c0" d="M952 57.5h7M952 59.5h7M952 63.5h8M952 65.5h8M952 67.5h8M952 169.5h6"/><path stroke="#569cd6" d="M960 57.5h21M960 59.5h21M955 73.5h6M952 77.5h5M952 79.5h6M959 83.5h6M959 85.5h6M959 87.5h6M974 91.5h5M1009 91.5h5M959 99.5h6M959 101.5h6M959 103.5h6M959 105.5h6M959 107.5h7M956 111.5h4M969 111.5h4M988 111.5h5M1017 111.5h5M956 113.5h4M956 115.5h4M971 115.5h5M997 115.5h3M956 117.5h4M969 117.5h5M995 117.5h5M1023 117.5h3M959 123.5h6M959 125.5h6M956 129.5h4M994 129.5h4M999 129.5h5M1019 129.5h5M952 133.5h7M956 137.5h6M963 137.5h4M1000 137.5h4M1015 137.5h4M956 139.5h6M963 139.5h3M991 139.5h4M1006 139.5h4M1023 139.5h3M956 141.5h6M963 141.5h4M1002 141.5h4M956 147.5h4M984 147.5h5M956 149.5h4M976 149.5h5M1002 149.5h5M956 151.5h4M956 161.5h4M970 163.5h4M975 163.5h5M995 163.5h5"/><path stroke="#ce9178" d="M961 63.5h14M961 65.5h8M961 67.5h12"/><path stroke="#6a9955" d="M952 71.5h3M953 73.5h1M962 73.5h16M953 75.5h2M956 81.5h3M957 83.5h1M966 83.5h8M957 85.5h1M981 85.5h14M996 85.5h6M1003 85.5h29M957 87.5h1M976 87.5h8M957 89.5h2M956 97.5h3M957 99.5h1M966 99.5h16M957 101.5h1M978 101.5h24M957 103.5h1M975 103.5h16M957 105.5h1M975 105.5h14M957 107.5h1M967 107.5h12M957 109.5h2M956 121.5h3M957 123.5h1M966 123.5h20M957 125.5h1M975 125.5h8M957 127.5h2M956 135.5h2M959 135.5h28M956 145.5h2M959 145.5h40M973 161.5h2M976 161.5h12M959 169.5h2M962 169.5h21"/><path stroke="#4ec9b0" d="M958 77.5h17M956 91.5h17M980 91.5h3M985 91.5h6M1015 91.5h3M1020 91.5h6M994 111.5h3M999 111.5h6M1023 111.5h3M1028 111.5h6M977 115.5h3M982 115.5h6M975 117.5h3M980 117.5h6M1001 117.5h3M1006 117.5h6M980 129.5h3M985 129.5h8M1005 129.5h3M1010 129.5h6M1025 129.5h3M1030 129.5h6M1037 139.5h18M1017 141.5h24M990 147.5h3M995 147.5h6M982 149.5h3M987 149.5h6M1008 149.5h3M1013 149.5h6M986 151.5h24M956 155.5h10M956 157.5h3M961 157.5h6M956 159.5h3M961 159.5h6M956 163.5h3M961 163.5h8M981 163.5h3M986 163.5h6M1001 163.5h3M1006 163.5h6"/><path stroke="#e0c020" d="M976 77.5h1M973 91.5h1M1037 91.5h1M974 93.5h1M975 93.5h1M968 111.5h1M1044 111.5h1M971 113.5h1M972 113.5h1M970 115.5h1M1004 115.5h1M968 117.5h1M1030 117.5h1M979 129.5h1M998 129.5h1M1037 129.5h1M1048 129.5h1M999 137.5h1M1026 137.5h1M990 139.5h1M1001 141.5h1M1044 141.5h1M983 147.5h1M1008 147.5h1M975 149.5h1M1028 149.5h1M985 151.5h1M1013 151.5h1M974 163.5h1M1013 163.5h1M952 165.5h1"/><path stroke="#cccccc" d="M958 79.5h1M983 91.5h2M991 91.5h1M1007 91.5h1M1018 91.5h2M1026 91.5h1M1038 91.5h1M956 93.5h1M976 93.5h1M973 111.5h1M986 111.5h1M997 111.5h2M1005 111.5h1M1015 111.5h1M1026 111.5h2M1034 111.5h1M1045 111.5h1M973 113.5h1M980 115.5h2M988 115.5h1M995 115.5h1M1005 115.5h1M978 117.5h2M986 117.5h1M993 117.5h1M1004 117.5h2M1012 117.5h1M1021 117.5h1M1031 117.5h1M983 129.5h2M993 129.5h1M1008 129.5h2M1016 129.5h1M1017 129.5h1M1028 129.5h2M1036 129.5h1M1038 129.5h1M1049 129.5h1M959 133.5h1M1004 137.5h1M1013 137.5h1M1019 137.5h1M1027 137.5h1M995 139.5h1M1004 139.5h1M1010 139.5h1M1021 139.5h1M1035 139.5h1M1055 139.5h1M1006 141.5h1M1015 141.5h1M1045 141.5h1M993 147.5h2M1001 147.5h1M1009 147.5h1M985 149.5h2M993 149.5h1M1000 149.5h1M1011 149.5h2M1019 149.5h1M1029 149.5h1M1014 151.5h1M974 155.5h1M959 157.5h2M983 157.5h1M959 159.5h2M978 159.5h1M971 161.5h1M959 163.5h2M969 163.5h1M984 163.5h2M992 163.5h1M993 163.5h1M1004 163.5h2M1012 163.5h1M1014 163.5h1M1033 163.5h1M953 165.5h1"/><path stroke="#9cdcfe" d="M966 85.5h14M966 87.5h9M993 91.5h14M1028 91.5h9M966 101.5h11M966 103.5h8M966 105.5h8M975 111.5h11M1007 111.5h8M1036 111.5h8M990 115.5h5M1001 115.5h3M988 117.5h5M1014 117.5h7M1027 117.5h3M966 125.5h8M1040 129.5h8M1006 137.5h7M1021 137.5h5M997 139.5h7M1012 139.5h9M1027 139.5h8M1008 141.5h7M1042 141.5h2M1003 147.5h5M995 149.5h5M1021 149.5h7M1011 151.5h2M967 155.5h7M968 157.5h15M968 159.5h10M961 161.5h10M1016 163.5h17"/><path stroke="#dcdcaa" d="M957 93.5h17M961 111.5h7M961 113.5h10M961 115.5h9M961 117.5h7M961 129.5h18M968 137.5h31M967 139.5h23M968 141.5h33M961 147.5h22M961 149.5h14M961 151.5h24"/></svg>
<div class="abs" style="left:1056px;top:57px;width:14px;height:734px;border-left:1px solid #111"></div>
<div class="abs" style="left:1056px;top:221px;width:14px;height:300px;background:#434343"></div>
<div class="abs" style="left:1056px;top:57px;width:14px;height:2px;background:#8a8a8a"></div>
</div>
<div class="abs" style="left:1418px;top:35px;width:1px;height:791px;background:#2b2b2b"></div>
<div class="ed" style="left:1419px;top:35px;width:1069px;height:791px">
<div class="tabs" style="width:1069px"></div>
<div class="tab" style="left:0;width:197px;background:#181818;color:#9d9d9d">
<svg class="abs" style="left:11px;top:9px" width="16" height="16" viewBox="0 0 16 16" fill="none" stroke-linecap="butt"><path d="M10.760 5.830A3.600 4 0 1 0 10.760 10.970" stroke="#a074c4" stroke-width="2.200"/></svg>
<span class="abs" style="left:31px;font-size:13.6px;letter-spacing:-0.049px;">mqtt_client_manager.h</span>
</div>
<div class="tab act" style="left:197px;width:208px;color:#fff;border-top:1px solid #0078d4;line-height:34px">
<svg class="abs" style="left:12px;top:9px" width="16" height="16" viewBox="0 0 16 16" fill="none" stroke-linecap="butt"><path d="M9.450 6A3.200 3.700 0 1 0 9.450 10.800" stroke="#519aba" stroke-width="2.100"/><path d="M9.300 8.300h2.400M10.500 7.100v2.400M12.100 8.300h2.400M13.300 7.100v2.400" stroke="#519aba" stroke-width="1"/></svg>
<span class="abs" style="left:33px;font-style:italic;font-size:13.6px;letter-spacing:-0.310px;">mqtt_client_manager.cpp</span>
<svg class="abs" style="left:185px;top:9px" width="16" height="16" viewBox="0 0 16 16" fill="none" stroke="#fff" stroke-width="1.2" stroke-linecap="round" stroke-linejoin="round" ><path d="M3.500 3.500l9 9M12.500 3.500l-9 9"/></svg>
</div>
<svg class="abs" style="left:917px;top:10px" width="16" height="16" viewBox="0 0 16 16" fill="none" stroke="#ccc" stroke-width="1.1" stroke-linecap="round" stroke-linejoin="round" ><path d="M2 6.500l5-3 5 3-5 3zM4 9l-1 3.500 3-1.500M9 2l.5 1.300"/></svg>
<svg class="abs" style="left:934px;top:12px" width="11" height="11" viewBox="0 0 16 16" fill="none" stroke="#ccc" stroke-width="1.3" stroke-linecap="round" stroke-linejoin="round" ><path d="M3.300 5.900l4.700 4.700 4.700-4.700"/></svg>
<svg class="abs" style="left:960px;top:10px" width="16" height="16" viewBox="0 0 16 16" fill="none" stroke="#ccc" stroke-width="1.1" stroke-linecap="round" stroke-linejoin="round" ><circle cx="8" cy="8" r="2"/><path d="M6.800 1.500h2.400l.4 1.800 1.200.7 1.700-.6 1.200 2.100-1.300 1.200v1.400l1.300 1.200-1.200 2.100-1.700-.6-1.200.7-.4 1.800H6.800l-.4-1.800-1.200-.7-1.700.6-1.200-2.100 1.300-1.200V7.300L2.300 6.100l1.200-2.100 1.700.6 1.200-.7z"/></svg>
<svg class="abs" style="left:986px;top:10px" width="16" height="16" viewBox="0 0 16 16" fill="none" stroke="#ccc" stroke-width="1.1" stroke-linecap="round" stroke-linejoin="round" ><path d="M2.500 6.500v7h11v-7M8 1v6M5.500 5L8 7.500 10.500 5"/><circle cx="6.500" cy="11" r=".7" fill="#ccc"/><circle cx="9.500" cy="11" r=".7" fill="#ccc"/><circle cx="8" cy="9" r=".7" fill="#ccc"/></svg>
<svg class="abs" style="left:1012px;top:10px" width="16" height="16" viewBox="0 0 16 16" fill="none" stroke="#ccc" stroke-width="1.1" stroke-linecap="round" stroke-linejoin="round" ><rect x="1.500" y="2.500" width="13" height="11" rx="1.500"/><path d="M1.500 8h13"/></svg>
<svg class="abs" style="left:1038px;top:10px" width="16" height="16" viewBox="0 0 16 16" fill="none" stroke="#ccc" stroke-width="1" stroke-linecap="round" stroke-linejoin="round" color="#ccc"><circle cx="3.500" cy="8" r="1" fill="currentColor" stroke="none"/><circle cx="8" cy="8" r="1" fill="currentColor" stroke="none"/><circle cx="12.500" cy="8" r="1" fill="currentColor" stroke="none"/></svg>
<div class="bc" style="width:1069px">
<svg class="abs" style="left:17px;top:3px" width="16" height="16" viewBox="0 0 16 16" fill="none" stroke-linecap="butt"><path d="M9.450 6A3.200 3.700 0 1 0 9.450 10.800" stroke="#519aba" stroke-width="2.100"/><path d="M9.300 8.300h2.400M10.500 7.100v2.400M12.100 8.300h2.400M13.300 7.100v2.400" stroke="#519aba" stroke-width="1"/></svg>
<span class="abs" style="left:37px;font-size:13.6px;letter-spacing:-0.060px;">mqtt_client_manager.cpp</span>
<svg class="abs" style="left:189px;top:3px" width="16" height="16" viewBox="0 0 16 16" fill="none" stroke="#a9a9a9" stroke-width="1.2" stroke-linecap="round" stroke-linejoin="round" ><path d="M5.900 3.300l4.700 4.700-4.700 4.700"/></svg>
<span class="abs" style="left:205px">…</span>
</div>
<div class="abs" style="left:0;top:57px;width:943px;height:734px;overflow:hidden">
<div class="abs" style="left:69px;top:0;width:874px;height:19px;border:1px solid #2e2e2e"></div>
<div class="num" style="left:0;top:0px;width:43px;color:#ccc">1</div>
<div class="code" style="left:69px;top:0px"><span class="c">#include</span> <span class="s">"mqtt_client_manager.h"</span></div>
<div class="num" style="left:0;top:19px;width:43px">2</div>
<div class="code" style="left:69px;top:19px"><span class="c">#include</span> <span class="s">&lt;iostream&gt;</span></div>
<div class="num" style="left:0;top:38px;width:43px">3</div>
<div class="code" style="left:69px;top:38px"><span class="c">#include</span> <span class="s">&lt;cstring&gt;</span></div>
<div class="num" style="left:0;top:57px;width:43px">4</div>
<div class="code" style="left:69px;top:57px"></div>
<div class="num" style="left:0;top:76px;width:43px">5</div>
<div class="code" style="left:69px;top:76px"><span class="m">// 静态回调函数实现</span></div>
<svg class="abs" style="left:68px;top:96px" width="24" height="14" viewBox="0 0 24 14"><g fill="#c2c2c2"><path d="M3.700 .8h5l2.600 2.800H4.200L2.600 2.200z"/><path d="M1 4.400h2.500l2.200 3.400-2.200 3.400H1l2.100-3.400z"/><path d="M4.700 4.600h5.800L7.500 9.400z"/><path d="M11.300 4.800l1.400 1.200-5 7.300H5.500l.8-1.500 3.600-5.600z"/></g><path d="M14.800 5.200l3.200 3.200 3.200-3.200" fill="none" stroke="#b8b8b8" stroke-width="1.100"/></svg>
<div class="num" style="left:0;top:111px;width:43px">6</div>
<div class="code" style="left:69px;top:111px"><span class="k">void</span> <span class="t">MqttClientManager</span>::<span class="f">static_connection_lost_callback</span><span class="b0">(</span><span class="k">void</span><span class="k">*</span> <span class="v">context</span>, <span class="k">char</span><span class="k">*</span> <span class="v">cause</span><span class="b0">)</span> <span class="b0">{</span></div>
<div class="num" style="left:0;top:130px;width:43px">7</div>
<div class="code" style="left:69px;top:130px">    <span class="c">if</span> <span class="b1">(</span><span class="v">context</span><span class="b1">)</span> <span class="b1">{</span></div>
<div class="num" style="left:0;top:149px;width:43px">8</div>
<div class="code" style="left:69px;top:149px">        <span class="t">MqttClientManager</span>* <span class="v">manager</span> = <span class="k">static_cast</span>&lt;<span class="t">MqttClientManager</span>*&gt;<span class="b2">(</span><span class="v">context</span><span class="b2">)</span>;</div>
<div class="num" style="left:0;top:168px;width:43px">9</div>
<div class="code" style="left:69px;top:168px">        <span class="v">manager</span>-&gt;<span class="f">handle_connection_lost</span><span class="b2">(</span><span class="v">cause</span> ? <span class="t">std</span>::<span class="t">string</span><span class="b0">(</span><span class="v">cause</span><span class="b0">)</span> : <span class="s">""</span><span class="b2">)</span>;</div>
<div class="num" style="left:0;top:187px;width:43px">10</div>
<div class="code" style="left:69px;top:187px">    <span class="b1">}</span></div>
<div class="num" style="left:0;top:206px;width:43px">11</div>
<div class="code" style="left:69px;top:206px"><span class="b0">}</span></div>
<div class="num" style="left:0;top:225px;width:43px">12</div>
<div class="code" style="left:69px;top:225px"></div>
<svg class="abs" style="left:68px;top:245px" width="24" height="14" viewBox="0 0 24 14"><g fill="#c2c2c2"><path d="M3.700 .8h5l2.600 2.800H4.200L2.600 2.200z"/><path d="M1 4.400h2.500l2.200 3.400-2.200 3.400H1l2.100-3.400z"/><path d="M4.700 4.600h5.800L7.500 9.400z"/><path d="M11.300 4.800l1.400 1.200-5 7.300H5.500l.8-1.500 3.600-5.600z"/></g><path d="M14.800 5.200l3.200 3.200 3.200-3.200" fill="none" stroke="#b8b8b8" stroke-width="1.100"/></svg>
<div class="num" style="left:0;top:260px;width:43px">13</div>
<div class="code" style="left:69px;top:260px"><span class="k">int</span> <span class="t">MqttClientManager</span>::<span class="f">static_message_callback</span><span class="b0">(</span><span class="k">void</span><span class="k">*</span> <span class="v">context</span>, <span class="k">char</span><span class="k">*</span> <span class="v">topicName</span>, <span class="k">int</span> <span class="v">topicLen</span>, <span class="t">MQTTClient_message</span>* <span class="v">message</span><span class="b0">)</span> <span class="b0">{</span></div>
<div class="num" style="left:0;top:279px;width:43px">14</div>
<div class="code" style="left:69px;top:279px">    <span class="c">if</span> <span class="b1">(</span><span class="v">context</span><span class="b1">)</span> <span class="b1">{</span></div>
<div class="num" style="left:0;top:298px;width:43px">15</div>
<div class="code" style="left:69px;top:298px">        <span class="t">MqttClientManager</span>* <span class="v">manager</span> = <span class="k">static_cast</span>&lt;<span class="t">MqttClientManager</span>*&gt;<span class="b2">(</span><span class="v">context</span><span class="b2">)</span>;</div>
<div class="num" style="left:0;top:317px;width:43px">16</div>
<div class="code" style="left:69px;top:317px">        <span class="t">std</span>::<span class="t">string</span> <span class="v">topic</span><span class="b2">(</span><span class="v">topicName</span>, <span class="v">topicLen</span> &gt; <span class="n">0</span> ? <span class="v">topicLen</span> : <span class="f">strlen</span><span class="b0">(</span><span class="v">topicName</span><span class="b0">)</span><span class="b2">)</span>;</div>
<div class="num" style="left:0;top:336px;width:43px">17</div>
<div class="code" style="left:69px;top:336px">        <span class="t">std</span>::<span class="t">string</span> <span class="v">payload</span><span class="b2">(</span><span class="k">static_cast</span>&lt;<span class="k">char</span><span class="k">*</span>&gt;<span class="b0">(</span><span class="v">message</span>-&gt;<span class="v">payload</span><span class="b0">)</span>, <span class="v">message</span>-&gt;<span class="v">payloadlen</span><span class="b2">)</span>;</div>
<div class="num" style="left:0;top:355px;width:43px">18</div>
<div class="code" style="left:69px;top:355px">        <span class="v">manager</span>-&gt;<span class="f">handle_message</span><span class="b2">(</span><span class="v">topic</span>, <span class="v">payload</span><span class="b2">)</span>;</div>
<div class="num" style="left:0;top:374px;width:43px">19</div>
<div class="code" style="left:69px;top:374px">        <span class="f">MQTTClient_freeMessage</span><span class="b2">(</span>&amp;<span class="v">message</span><span class="b2">)</span>;</div>
<div class="num" style="left:0;top:393px;width:43px">20</div>
<div class="code" style="left:69px;top:393px">        <span class="f">MQTTClient_free</span><span class="b2">(</span><span class="v">topicName</span><span class="b2">)</span>;</div>
<div class="num" style="left:0;top:412px;width:43px">21</div>
<div class="code" style="left:69px;top:412px">    <span class="b1">}</span></div>
<div class="num" style="left:0;top:431px;width:43px">22</div>
<div class="code" style="left:69px;top:431px">    <span class="c">return</span> <span class="n">1</span>;</div>
<div class="num" style="left:0;top:450px;width:43px">23</div>
<div class="code" style="left:69px;top:450px"><span class="b0">}</span></div>
<div class="num" style="left:0;top:469px;width:43px">24</div>
<div class="code" style="left:69px;top:469px"></div>
<svg class="abs" style="left:68px;top:489px" width="24" height="14" viewBox="0 0 24 14"><g fill="#c2c2c2"><path d="M3.700 .8h5l2.600 2.800H4.200L2.600 2.200z"/><path d="M1 4.400h2.500l2.200 3.400-2.200 3.400H1l2.100-3.400z"/><path d="M4.700 4.600h5.800L7.500 9.400z"/><path d="M11.300 4.800l1.400 1.200-5 7.300H5.500l.8-1.500 3.600-5.600z"/></g><path d="M14.800 5.200l3.200 3.200 3.200-3.200" fill="none" stroke="#b8b8b8" stroke-width="1.100"/></svg>
<div class="num" style="left:0;top:504px;width:43px">25</div>
<div class="code" style="left:69px;top:504px"><span class="k">void</span> <span class="t">MqttClientManager</span>::<span class="f">static_delivery_complete_callback</span><span class="b0">(</span><span class="k">void</span><span class="k">*</span> <span class="v">context</span>, <span class="t">MQTTClient_deliveryToken</span> <span class="v">dt</span><span class="b0">)</span> <span class="b0">{</span></div>
<div class="num" style="left:0;top:523px;width:43px">26</div>
<div class="code" style="left:69px;top:523px">    <span class="c">if</span> <span class="b1">(</span><span class="v">context</span><span class="b1">)</span> <span class="b1">{</span></div>
<div class="num" style="left:0;top:542px;width:43px">27</div>
<div class="code" style="left:69px;top:542px">        <span class="t">MqttClientManager</span>* <span class="v">manager</span> = <span class="k">static_cast</span>&lt;<span class="t">MqttClientManager</span>*&gt;<span class="b2">(</span><span class="v">context</span><span class="b2">)</span>;</div>
<div class="num" style="left:0;top:561px;width:43px">28</div>
<div class="code" style="left:69px;top:561px">        <span class="v">manager</span>-&gt;<span class="f">handle_delivery_complete</span><span class="b2">(</span><span class="v">dt</span><span class="b2">)</span>;</div>
<div class="num" style="left:0;top:580px;width:43px">29</div>
<div class="code" style="left:69px;top:580px">    <span class="b1">}</span></div>
<div class="num" style="left:0;top:599px;width:43px">30</div>
<div class="code" style="left:69px;top:599px"><span class="b0">}</span></div>
<div class="num" style="left:0;top:618px;width:43px">31</div>
<div class="code" style="left:69px;top:618px"></div>
<svg class="abs" style="left:68px;top:638px" width="24" height="14" viewBox="0 0 24 14"><g fill="#c2c2c2"><path d="M3.700 .8h5l2.600 2.800H4.200L2.600 2.200z"/><path d="M1 4.400h2.500l2.200 3.400-2.200 3.400H1l2.100-3.400z"/><path d="M4.700 4.600h5.800L7.500 9.400z"/><path d="M11.300 4.800l1.400 1.200-5 7.300H5.500l.8-1.500 3.600-5.600z"/></g><path d="M14.800 5.200l3.200 3.200 3.200-3.200" fill="none" stroke="#b8b8b8" stroke-width="1.100"/></svg>
<div class="num" style="left:0;top:653px;width:43px">32</div>
<div class="code" style="left:69px;top:653px"><span class="t">MqttClientManager</span>::<span class="f">MqttClientManager</span><span class="b0">(</span><span class="k">const</span> <span class="t">std</span>::<span class="t">string</span>&amp; <span class="v">broker_address</span>, <span class="k">const</span> <span class="t">std</span>::<span class="t">string</span>&amp; <span class="v">client_id</span><span class="b0">)</span></div>
<div class="num" style="left:0;top:672px;width:43px">33</div>
<div class="code" style="left:69px;top:672px">    : <span class="v">broker_address_</span><span class="b0">(</span><span class="v">broker_address</span><span class="b0">)</span>, <span class="v">client_id_</span><span class="b0">(</span><span class="v">client_id</span><span class="b0">)</span>, <span class="v">connected_</span><span class="b0">(</span><span class="k">false</span><span class="b0">)</span>, <span class="v">client_</span><span class="b0">(</span><span class="k">nullptr</span><span class="b0">)</span> <span class="b0">{</span></div>
<div class="num" style="left:0;top:691px;width:43px">34</div>
<div class="code" style="left:69px;top:691px"></div>
<div class="num" style="left:0;top:710px;width:43px">35</div>
<div class="code" style="left:69px;top:710px">    <span class="t">std</span>::<span class="v">cout</span> &lt;&lt; <span class="s">"初始化MQTT客户端..."</span> &lt;&lt; <span class="t">std</span>::<span class="f">endl</span>;</div>
<div class="num" style="left:0;top:729px;width:43px">36</div>
<div class="code" style="left:69px;top:729px">    <span class="t">std</span>::<span class="v">cout</span> &lt;&lt; <span class="s">"Broker地址: "</span> &lt;&lt; <span class="v">broker_address_</span> &lt;&lt; <span class="t">std</span>::<span class="f">endl</span>;</div>
<div class="guide" style="left:69px;top:130px;height:76px"></div>
<div class="guide" style="left:69px;top:279px;height:171px"></div>
<div class="guide" style="left:69px;top:523px;height:76px"></div>
<div class="guide" style="left:69px;top:672px;height:76px"></div>
<div class="guide" style="left:103px;top:149px;height:38px"></div>
<div class="guide" style="left:103px;top:298px;height:114px"></div>
<div class="guide" style="left:103px;top:542px;height:38px"></div>
</div>
<div class="abs" style="left:943px;top:57px;width:114px;height:734px;background:#1f1f1f;box-shadow:-3px 0 4px -2px #000"></div>
<svg class="abs" style="left:0;top:0" width="1069" height="791" fill="none" stroke-width="1.300" stroke-opacity=".5"><path stroke="#c586c0" d="M951 57.5h8M951 59.5h8M951 61.5h8M955 69.5h2M955 83.5h2M955 99.5h6M955 107.5h2M955 135.5h2M959 139.5h6M955 145.5h2M959 149.5h6M955 167.5h2M959 173.5h6M955 185.5h2M959 201.5h2M961 205.5h4M957 211.5h4M955 227.5h2M955 241.5h2M959 245.5h6M955 265.5h2M955 273.5h2M955 303.5h2M959 307.5h6M955 317.5h6M955 325.5h2M955 343.5h2M959 347.5h6M955 353.5h2M959 357.5h6M955 367.5h2M959 371.5h6M957 373.5h4M959 377.5h6M955 387.5h2M959 391.5h6M955 397.5h2M959 401.5h6M955 429.5h2M959 433.5h6M955 443.5h2M959 447.5h6M957 449.5h4M959 453.5h6M955 483.5h2"/><path stroke="#ce9178" d="M960 57.5h23M960 59.5h10M960 61.5h9M1020 73.5h2M968 125.5h21M968 127.5h12M981 127.5h1M968 129.5h10M979 129.5h1M972 137.5h6M979 137.5h15M972 147.5h6M979 147.5h13M968 157.5h26M968 165.5h25M994 165.5h1M972 169.5h28M1001 169.5h1M1012 169.5h1M1014 169.5h2M1047 169.5h3M968 179.5h20M972 187.5h17M976 203.5h26M1003 203.5h1M1014 203.5h1M1016 203.5h2M1049 203.5h3M976 207.5h18M972 213.5h19M968 223.5h19M972 243.5h20M968 293.5h23M968 295.5h8M977 295.5h1M1025 295.5h4M972 305.5h22M995 305.5h1M1006 305.5h1M1008 305.5h2M1041 305.5h3M968 315.5h14M972 327.5h17M972 333.5h16M972 345.5h20M972 355.5h12M968 363.5h10M979 363.5h1M972 369.5h10M972 375.5h22M995 375.5h1M1006 375.5h1M1008 375.5h2M1041 375.5h3M972 389.5h20M972 399.5h12M968 423.5h16M985 423.5h1M972 431.5h22M995 431.5h1M1006 431.5h1M1008 431.5h2M1041 431.5h3M972 445.5h18M972 451.5h20M993 451.5h1M1007 451.5h1M1009 451.5h2M1035 451.5h1M1037 451.5h6M968 473.5h14M983 473.5h1M968 481.5h9M978 481.5h2M993 481.5h3M997 481.5h1"/><path stroke="#6a9955" d="M951 65.5h2M954 65.5h16M955 133.5h2M958 133.5h8M955 155.5h2M958 155.5h14M955 183.5h2M958 183.5h12M959 189.5h2M962 189.5h8M955 251.5h2M958 251.5h8M955 263.5h2M958 263.5h24M955 281.5h2M958 281.5h7M990 285.5h2M993 285.5h22M987 287.5h2M990 287.5h27M955 299.5h2M958 299.5h4M955 439.5h2M958 439.5h16"/><path stroke="#569cd6" d="M951 67.5h4M1007 67.5h4M1022 67.5h4M988 71.5h11M951 81.5h3M998 81.5h4M1013 81.5h4M1030 81.5h3M988 85.5h11M979 89.5h11M991 89.5h4M951 105.5h4M1009 105.5h4M988 109.5h11M988 119.5h5M1023 119.5h5M1024 121.5h5M1040 121.5h7M955 159.5h3M982 161.5h27M1011 161.5h4M965 167.5h18M969 171.5h7M970 185.5h7M997 191.5h4M969 201.5h18M970 227.5h7M969 231.5h7M951 239.5h4M983 239.5h4M1002 239.5h5M1031 239.5h5M970 241.5h7M966 245.5h5M993 253.5h37M979 259.5h17M988 283.5h33M955 301.5h3M965 303.5h18M966 307.5h5M968 313.5h4M962 317.5h4M951 323.5h4M970 325.5h7M972 331.5h5M951 341.5h4M985 341.5h5M1011 341.5h3M970 343.5h7M966 347.5h5M966 357.5h5M955 365.5h3M965 367.5h18M966 371.5h5M966 377.5h5M951 385.5h4M983 385.5h5M1009 385.5h5M1037 385.5h3M970 387.5h7M966 391.5h5M966 401.5h5M983 407.5h30M972 413.5h10M983 413.5h4M955 427.5h3M965 429.5h18M966 433.5h5M965 443.5h18M966 447.5h5M966 453.5h4M951 461.5h4M1008 461.5h4M1013 461.5h5M1033 461.5h5M951 469.5h4M998 469.5h5M968 471.5h5M951 479.5h4M990 479.5h5M1016 479.5h5M951 493.5h4"/><path stroke="#4ec9b0" d="M956 67.5h17M959 71.5h17M1000 71.5h17M999 73.5h3M1004 73.5h6M955 81.5h17M1044 81.5h11M959 85.5h17M1000 85.5h17M959 87.5h3M964 87.5h6M959 89.5h3M964 89.5h6M956 105.5h17M1024 105.5h24M959 109.5h17M1000 109.5h17M951 119.5h17M994 119.5h3M999 119.5h6M1029 119.5h3M1034 119.5h6M955 125.5h3M993 125.5h3M955 127.5h3M1005 127.5h3M955 129.5h3M998 129.5h3M959 137.5h3M998 137.5h3M959 147.5h3M996 147.5h3M955 157.5h3M998 157.5h3M955 165.5h3M1005 165.5h3M959 169.5h3M1054 169.5h1M955 179.5h3M992 179.5h3M959 187.5h3M993 187.5h3M963 203.5h3M963 207.5h3M998 207.5h3M959 213.5h3M995 213.5h3M951 221.5h17M955 223.5h3M991 223.5h3M956 239.5h17M1008 239.5h3M1013 239.5h6M1037 239.5h3M1042 239.5h6M959 243.5h3M996 243.5h3M955 253.5h25M955 283.5h21M955 293.5h3M995 293.5h3M955 295.5h3M1034 295.5h3M959 305.5h3M1048 305.5h3M955 315.5h3M986 315.5h3M956 323.5h17M959 327.5h3M993 327.5h3M959 333.5h3M992 333.5h3M956 341.5h17M991 341.5h3M996 341.5h6M959 345.5h3M996 345.5h3M959 355.5h3M988 355.5h3M955 363.5h3M993 363.5h3M959 369.5h3M986 369.5h3M959 375.5h3M1048 375.5h3M956 385.5h17M989 385.5h3M994 385.5h6M1015 385.5h3M1020 385.5h6M959 389.5h3M996 389.5h3M959 399.5h3M988 399.5h3M955 407.5h18M955 409.5h24M955 423.5h3M999 423.5h3M959 431.5h3M1048 431.5h3M959 445.5h3M994 445.5h3M959 451.5h3M1047 451.5h3M956 461.5h17M994 461.5h3M999 461.5h8M1019 461.5h3M1024 461.5h6M1039 461.5h3M1044 461.5h6M956 469.5h17M1004 469.5h3M1009 469.5h6M955 473.5h3M997 473.5h3M956 479.5h17M996 479.5h3M1001 479.5h6M1022 479.5h3M1027 479.5h6M955 481.5h3M1013 481.5h3M956 493.5h17M1000 493.5h24"/><path stroke="#cccccc" d="M973 67.5h2M1011 67.5h1M1020 67.5h1M1026 67.5h1M976 71.5h1M986 71.5h1M999 71.5h1M1017 71.5h1M1018 71.5h1M1028 71.5h1M966 73.5h2M997 73.5h1M1002 73.5h2M1018 73.5h1M1023 73.5h1M972 81.5h2M1002 81.5h1M1011 81.5h1M1017 81.5h1M1028 81.5h1M1042 81.5h1M976 85.5h1M986 85.5h1M999 85.5h1M1017 85.5h1M1018 85.5h1M1028 85.5h1M962 87.5h2M986 87.5h1M997 87.5h1M1001 87.5h1M1012 87.5h1M1032 87.5h1M962 89.5h2M990 89.5h1M995 89.5h1M996 89.5h1M1005 89.5h2M1015 89.5h1M1024 89.5h2M1037 89.5h1M966 91.5h2M988 91.5h1M998 91.5h1M982 93.5h1M991 93.5h1M985 95.5h1M963 99.5h1M973 105.5h2M1013 105.5h1M1022 105.5h1M976 109.5h1M986 109.5h1M999 109.5h1M1017 109.5h1M1018 109.5h1M1028 109.5h1M966 111.5h2M996 111.5h1M968 119.5h2M997 119.5h2M1005 119.5h1M1021 119.5h1M1032 119.5h2M1040 119.5h1M955 121.5h1M988 121.5h1M1011 121.5h1M1030 121.5h1M958 125.5h2M965 125.5h2M990 125.5h2M996 125.5h2M1002 125.5h1M958 127.5h2M965 127.5h2M983 127.5h2M1002 127.5h2M1008 127.5h2M1014 127.5h1M958 129.5h2M965 129.5h2M981 129.5h2M995 129.5h2M1001 129.5h2M1007 129.5h1M974 135.5h1M962 137.5h2M969 137.5h2M995 137.5h2M1001 137.5h2M1007 137.5h1M965 139.5h1M969 145.5h1M962 147.5h2M969 147.5h2M993 147.5h2M999 147.5h2M1005 147.5h1M965 149.5h1M958 157.5h2M965 157.5h2M995 157.5h2M1001 157.5h2M1007 157.5h1M962 159.5h1M982 159.5h1M990 159.5h1M1007 159.5h1M1015 159.5h1M1027 159.5h1M1035 159.5h1M1009 161.5h1M1016 161.5h1M958 165.5h2M965 165.5h2M996 165.5h2M1002 165.5h2M1008 165.5h2M1014 165.5h1M962 167.5h1M963 167.5h1M962 169.5h2M969 169.5h2M1003 169.5h2M1009 169.5h2M1017 169.5h2M1044 169.5h2M1051 169.5h2M967 171.5h1M976 171.5h1M965 173.5h1M958 179.5h2M965 179.5h2M989 179.5h2M995 179.5h2M1001 179.5h1M967 185.5h1M968 185.5h1M962 187.5h2M969 187.5h2M990 187.5h2M996 187.5h2M1002 187.5h1M962 191.5h1M995 191.5h1M1001 191.5h1M1019 193.5h1M1011 195.5h1M1022 197.5h1M966 201.5h1M967 201.5h1M966 203.5h2M973 203.5h2M1005 203.5h2M1011 203.5h2M1019 203.5h2M1046 203.5h2M1053 203.5h2M966 207.5h2M973 207.5h2M995 207.5h2M1001 207.5h2M1007 207.5h1M962 213.5h2M969 213.5h2M992 213.5h2M998 213.5h2M1004 213.5h1M968 221.5h2M970 221.5h1M958 223.5h2M965 223.5h2M988 223.5h2M994 223.5h2M1000 223.5h1M967 225.5h1M967 227.5h1M968 227.5h1M978 229.5h1M987 229.5h1M967 231.5h1M976 231.5h1M973 239.5h2M987 239.5h1M1000 239.5h1M1011 239.5h2M1019 239.5h1M1029 239.5h1M1040 239.5h2M1048 239.5h1M967 241.5h1M968 241.5h1M962 243.5h2M969 243.5h2M993 243.5h2M999 243.5h2M1005 243.5h1M971 245.5h1M991 253.5h1M1030 253.5h1M964 255.5h1M983 255.5h1M987 255.5h1M964 257.5h1M978 257.5h1M981 257.5h1M964 259.5h1M977 259.5h1M996 259.5h1M959 265.5h1M968 265.5h1M968 267.5h1M978 267.5h1M988 267.5h1M996 267.5h1M959 273.5h1M968 273.5h1M968 275.5h1M978 275.5h1M988 275.5h1M996 275.5h1M986 283.5h1M1021 283.5h1M963 285.5h1M985 285.5h1M988 285.5h1M963 287.5h1M972 287.5h1M985 287.5h1M964 289.5h1M969 289.5h1M971 289.5h1M980 289.5h1M958 293.5h2M965 293.5h2M992 293.5h2M998 293.5h2M1004 293.5h1M958 295.5h2M965 295.5h2M979 295.5h2M992 295.5h1M1002 295.5h1M1013 295.5h1M1023 295.5h1M1031 295.5h2M1037 295.5h2M1043 295.5h1M962 301.5h1M990 301.5h1M992 301.5h1M1003 301.5h1M962 303.5h1M963 303.5h1M962 305.5h2M969 305.5h2M997 305.5h2M1003 305.5h2M1011 305.5h2M1038 305.5h2M1045 305.5h2M1051 305.5h2M971 307.5h1M966 313.5h1M972 313.5h1M958 315.5h2M965 315.5h2M983 315.5h2M989 315.5h2M995 315.5h1M966 317.5h1M973 323.5h2M967 325.5h1M968 325.5h1M978 325.5h2M962 327.5h2M969 327.5h2M990 327.5h2M996 327.5h2M1002 327.5h1M988 329.5h1M996 329.5h1M970 331.5h1M977 331.5h1M962 333.5h2M969 333.5h2M989 333.5h2M995 333.5h2M1001 333.5h1M973 341.5h2M994 341.5h2M1002 341.5h1M1009 341.5h1M967 343.5h1M968 343.5h1M962 345.5h2M969 345.5h2M993 345.5h2M999 345.5h2M1005 345.5h1M971 347.5h1M959 353.5h1M962 355.5h2M969 355.5h2M985 355.5h2M991 355.5h2M997 355.5h1M971 357.5h1M958 363.5h2M965 363.5h2M981 363.5h2M990 363.5h2M996 363.5h2M1002 363.5h1M962 365.5h1M992 365.5h1M999 365.5h1M1007 365.5h1M1013 365.5h1M962 367.5h1M963 367.5h1M962 369.5h2M969 369.5h2M983 369.5h2M989 369.5h2M995 369.5h1M971 371.5h1M962 375.5h2M969 375.5h2M997 375.5h2M1003 375.5h2M1011 375.5h2M1038 375.5h2M1045 375.5h2M1051 375.5h2M971 377.5h1M973 385.5h2M992 385.5h2M1000 385.5h1M1007 385.5h1M1018 385.5h2M1026 385.5h1M1035 385.5h1M967 387.5h1M968 387.5h1M962 389.5h2M969 389.5h2M993 389.5h2M999 389.5h2M1005 389.5h1M971 391.5h1M959 397.5h1M962 399.5h2M969 399.5h2M985 399.5h2M991 399.5h2M997 399.5h1M971 401.5h1M981 407.5h1M1013 407.5h1M985 409.5h1M961 413.5h1M970 413.5h1M982 413.5h1M987 413.5h1M988 413.5h1M997 413.5h1M1006 413.5h1M961 415.5h1M973 415.5h1M982 415.5h1M991 415.5h1M961 417.5h1M966 417.5h1M971 417.5h1M961 419.5h1M971 419.5h1M974 419.5h1M958 423.5h2M965 423.5h2M987 423.5h2M996 423.5h2M1002 423.5h2M1008 423.5h1M962 427.5h1M997 427.5h1M1004 427.5h1M1012 427.5h1M1014 427.5h1M1021 427.5h1M1023 427.5h1M1030 427.5h1M962 429.5h1M963 429.5h1M962 431.5h2M969 431.5h2M997 431.5h2M1003 431.5h2M1011 431.5h2M1038 431.5h2M1045 431.5h2M1051 431.5h2M971 433.5h1M958 441.5h1M996 441.5h1M1003 441.5h1M1011 441.5h1M962 443.5h1M963 443.5h1M962 445.5h2M969 445.5h2M991 445.5h2M997 445.5h2M1003 445.5h1M971 447.5h1M962 451.5h2M969 451.5h2M995 451.5h2M1004 451.5h2M1012 451.5h2M1022 451.5h1M1032 451.5h2M1044 451.5h2M1050 451.5h2M970 453.5h1M973 461.5h2M997 461.5h2M1007 461.5h1M1022 461.5h2M1030 461.5h1M1031 461.5h1M1042 461.5h2M1050 461.5h1M1052 461.5h1M973 463.5h1M983 463.5h1M973 469.5h2M1007 469.5h2M1015 469.5h1M966 471.5h1M973 471.5h1M958 473.5h2M965 473.5h2M985 473.5h2M994 473.5h2M1000 473.5h2M1006 473.5h1M973 479.5h2M999 479.5h2M1007 479.5h1M1014 479.5h1M1025 479.5h2M1033 479.5h1M958 481.5h2M965 481.5h2M981 481.5h2M990 481.5h2M999 481.5h2M1010 481.5h2M1016 481.5h2M1022 481.5h1M982 485.5h1M992 485.5h1M973 493.5h2"/><path stroke="#dcdcaa" d="M975 67.5h31M968 73.5h22M974 81.5h23M1014 87.5h6M968 91.5h14M959 93.5h22M959 95.5h15M975 105.5h33M968 111.5h24M970 119.5h17M975 135.5h5M970 145.5h5M964 159.5h17M1008 159.5h5M1028 159.5h5M1020 169.5h19M964 191.5h23M1022 203.5h19M971 221.5h17M955 225.5h10M959 229.5h18M975 239.5h7M969 265.5h5M989 267.5h5M969 273.5h5M989 275.5h5M964 301.5h18M1014 305.5h19M975 323.5h10M959 329.5h21M975 341.5h9M964 365.5h20M1000 365.5h5M1014 375.5h19M975 385.5h7M998 413.5h5M983 415.5h6M964 427.5h25M1005 427.5h5M1014 431.5h19M960 441.5h28M1023 451.5h6M975 461.5h18M975 469.5h22M975 479.5h14M975 493.5h24"/><path stroke="#e0c020" d="M1006 67.5h1M1033 67.5h1M1035 67.5h1M958 69.5h1M966 69.5h1M968 69.5h1M1019 71.5h1M1027 71.5h1M990 73.5h1M1010 73.5h1M1016 73.5h1M1022 73.5h1M955 75.5h1M951 77.5h1M997 81.5h1M958 83.5h1M966 83.5h1M968 83.5h1M1019 85.5h1M1027 85.5h1M976 87.5h1M1020 87.5h1M1030 87.5h1M1031 87.5h1M978 89.5h1M997 89.5h1M1014 89.5h1M1036 89.5h1M982 91.5h1M997 91.5h1M981 93.5h1M990 93.5h1M974 95.5h1M984 95.5h1M955 97.5h1M951 101.5h1M1008 105.5h1M1051 105.5h1M1053 105.5h1M958 107.5h1M966 107.5h1M968 107.5h1M1019 109.5h1M1027 109.5h1M992 111.5h1M995 111.5h1M955 113.5h1M951 115.5h1M987 119.5h1M1051 119.5h1M972 121.5h1M987 121.5h1M1000 121.5h1M1010 121.5h1M1023 121.5h1M1029 121.5h1M1039 121.5h1M1047 121.5h1M1049 121.5h1M958 135.5h1M980 135.5h1M981 135.5h1M982 135.5h1M984 135.5h1M955 141.5h1M958 145.5h1M975 145.5h1M976 145.5h1M977 145.5h1M979 145.5h1M955 151.5h1M981 159.5h1M1013 159.5h1M1014 159.5h1M1033 159.5h1M1034 159.5h1M1015 161.5h1M958 167.5h1M983 167.5h1M985 167.5h1M1039 169.5h1M1042 169.5h1M955 175.5h1M958 185.5h1M977 185.5h1M979 185.5h1M987 191.5h1M1021 197.5h1M962 201.5h1M987 201.5h1M989 201.5h1M1041 203.5h1M1044 203.5h1M959 205.5h1M966 205.5h1M959 209.5h1M955 211.5h1M962 211.5h1M955 215.5h1M951 217.5h1M988 221.5h1M989 221.5h1M991 221.5h1M965 225.5h1M966 225.5h1M958 227.5h1M977 227.5h1M979 227.5h1M977 229.5h1M986 229.5h1M955 233.5h1M951 235.5h1M982 239.5h1M958 241.5h1M977 241.5h1M979 241.5h1M955 247.5h1M958 265.5h1M974 265.5h1M975 265.5h1M976 265.5h1M978 265.5h1M994 267.5h1M995 267.5h1M955 269.5h1M958 273.5h1M974 273.5h1M975 273.5h1M976 273.5h1M978 273.5h1M994 275.5h1M995 275.5h1M955 277.5h1M982 295.5h1M1029 295.5h1M982 301.5h1M1002 301.5h1M958 303.5h1M983 303.5h1M985 303.5h1M1033 305.5h1M1036 305.5h1M955 309.5h1M951 319.5h1M985 323.5h1M986 323.5h1M988 323.5h1M958 325.5h1M991 325.5h1M993 325.5h1M980 329.5h1M995 329.5h1M955 335.5h1M951 337.5h1M984 341.5h1M1018 341.5h1M1020 341.5h1M958 343.5h1M977 343.5h1M979 343.5h1M955 349.5h1M958 353.5h1M970 353.5h1M972 353.5h1M955 359.5h1M984 365.5h1M1005 365.5h1M1006 365.5h1M1012 365.5h1M958 367.5h1M983 367.5h1M985 367.5h1M955 373.5h1M962 373.5h1M1033 375.5h1M1036 375.5h1M955 379.5h1M951 381.5h1M982 385.5h1M1044 385.5h1M1046 385.5h1M958 387.5h1M977 387.5h1M979 387.5h1M955 393.5h1M958 397.5h1M970 397.5h1M972 397.5h1M955 403.5h1M989 413.5h1M1003 413.5h1M1004 413.5h1M1005 413.5h1M989 415.5h1M990 415.5h1M989 427.5h1M1010 427.5h1M1011 427.5h1M1029 427.5h1M958 429.5h1M983 429.5h1M985 429.5h1M1033 431.5h1M1036 431.5h1M955 435.5h1M988 441.5h1M1010 441.5h1M958 443.5h1M983 443.5h1M985 443.5h1M955 449.5h1M962 449.5h1M1029 451.5h1M1030 451.5h1M955 455.5h1M951 457.5h1M993 461.5h1M1012 461.5h1M1051 461.5h1M951 465.5h1M997 469.5h1M1022 469.5h1M1024 469.5h1M951 475.5h1M989 479.5h1M1042 479.5h1M1044 479.5h1M958 483.5h1M976 483.5h1M978 483.5h1M976 485.5h1M991 485.5h1M955 487.5h1M951 489.5h1M999 493.5h1M1027 493.5h1M1029 493.5h1"/><path stroke="#9cdcfe" d="M1013 67.5h7M1028 67.5h5M959 69.5h7M978 71.5h7M1020 71.5h7M959 73.5h7M991 73.5h5M1011 73.5h5M1004 81.5h7M1019 81.5h9M1034 81.5h8M959 83.5h7M978 85.5h7M1020 85.5h7M971 87.5h5M977 87.5h9M988 87.5h8M1003 87.5h8M1021 87.5h9M971 89.5h7M998 89.5h7M1007 89.5h7M1017 89.5h7M1026 89.5h10M959 91.5h7M983 91.5h5M990 91.5h7M983 93.5h7M975 95.5h9M1015 105.5h7M1049 105.5h2M959 107.5h7M978 109.5h7M1020 109.5h7M959 111.5h7M993 111.5h2M1007 119.5h14M1042 119.5h9M957 121.5h15M973 121.5h14M990 121.5h10M1001 121.5h9M1013 121.5h10M1032 121.5h7M960 125.5h4M998 125.5h4M960 127.5h4M986 127.5h15M1010 127.5h4M960 129.5h4M984 129.5h10M1003 129.5h4M959 135.5h15M964 137.5h4M1003 137.5h4M959 145.5h10M964 147.5h4M1001 147.5h4M960 157.5h4M1003 157.5h4M959 159.5h2M983 159.5h7M992 159.5h15M1017 159.5h10M960 165.5h4M999 165.5h2M1010 165.5h4M959 167.5h2M964 169.5h4M1006 169.5h2M1040 169.5h2M959 171.5h7M960 179.5h4M997 179.5h4M959 185.5h7M964 187.5h4M998 187.5h4M959 191.5h2M988 191.5h7M988 193.5h31M988 195.5h23M988 197.5h33M963 201.5h2M968 203.5h4M1008 203.5h2M1042 203.5h2M968 207.5h4M1003 207.5h4M964 213.5h4M1000 213.5h4M960 223.5h4M996 223.5h4M959 227.5h7M979 229.5h7M959 231.5h7M989 239.5h11M1021 239.5h8M1050 239.5h5M959 241.5h7M964 243.5h4M1001 243.5h4M981 253.5h9M955 255.5h9M965 255.5h17M955 257.5h9M965 257.5h12M955 259.5h9M965 259.5h11M960 265.5h8M959 267.5h9M969 267.5h8M980 267.5h8M960 273.5h8M959 275.5h9M969 275.5h8M980 275.5h8M977 283.5h8M955 285.5h8M964 285.5h20M955 287.5h8M964 287.5h7M974 287.5h11M955 289.5h9M965 289.5h3M972 289.5h8M960 293.5h4M1000 293.5h4M960 295.5h4M983 295.5h9M993 295.5h8M1004 295.5h9M1014 295.5h8M1039 295.5h4M959 301.5h2M983 301.5h7M993 301.5h9M959 303.5h2M964 305.5h4M1000 305.5h2M1034 305.5h2M1053 305.5h2M955 313.5h10M960 315.5h4M991 315.5h4M959 325.5h7M981 325.5h10M964 327.5h4M998 327.5h4M981 329.5h7M959 331.5h10M964 333.5h4M997 333.5h4M1004 341.5h5M1015 341.5h3M959 343.5h7M964 345.5h4M1001 345.5h4M960 353.5h10M964 355.5h4M993 355.5h4M960 363.5h4M984 363.5h5M998 363.5h4M959 365.5h2M985 365.5h7M994 365.5h5M1009 365.5h3M959 367.5h2M964 369.5h4M991 369.5h4M964 375.5h4M1000 375.5h2M1034 375.5h2M1053 375.5h2M1002 385.5h5M1028 385.5h7M1041 385.5h3M959 387.5h7M964 389.5h4M1001 389.5h4M960 397.5h10M964 399.5h4M993 399.5h4M974 407.5h6M980 409.5h5M955 413.5h6M962 413.5h7M990 413.5h7M955 415.5h6M962 415.5h10M975 415.5h7M955 417.5h6M962 417.5h3M968 417.5h3M955 419.5h6M962 419.5h8M960 423.5h4M990 423.5h5M1004 423.5h4M959 427.5h2M990 427.5h7M999 427.5h5M1015 427.5h6M1024 427.5h5M959 429.5h2M964 431.5h4M1000 431.5h2M1034 431.5h2M1053 431.5h2M955 441.5h2M989 441.5h7M998 441.5h5M959 443.5h2M964 445.5h4M999 445.5h4M964 451.5h4M998 451.5h5M1015 451.5h7M1052 451.5h3M1054 461.5h1M955 463.5h17M975 463.5h8M1017 469.5h5M955 471.5h10M960 473.5h4M988 473.5h5M1002 473.5h4M1009 479.5h5M1035 479.5h7M960 481.5h4M984 481.5h5M1002 481.5h7M1018 481.5h4M959 483.5h17M959 485.5h17M977 485.5h5M984 485.5h7M1025 493.5h2"/><path stroke="#b5cea8" d="M999 87.5h1M962 99.5h1M985 255.5h2M980 257.5h1M987 285.5h1M990 329.5h5M973 419.5h1M1005 441.5h5"/></svg>
<div class="abs" style="left:1055px;top:57px;width:14px;height:734px;border-left:1px solid #111"></div>
<div class="abs" style="left:1055px;top:57px;width:14px;height:2px;background:#8a8a8a"></div>
</div>
<svg class="abs" style="left:0;top:0;z-index:5;pointer-events:none" width="2488" height="200" viewBox="0 0 2488 200">
<defs><path id="arcT" d="M1981.3 63.3A38.500 38.500 0 0 1 2052.3 63.3"/><path id="arcB" d="M1973.5 82.3A43.500 43.500 0 0 0 2060.1 82.3"/></defs>
<circle cx="2016.8" cy="78.3" r="48" fill="none" stroke="#3f7b5e" stroke-width="1.500"/>
<circle cx="2016.8" cy="80.6" r="31.500" fill="#3f7b5e"/>
<circle cx="2016.8" cy="80.6" r="26.500" fill="none" stroke="#1f2a24" stroke-width="3" stroke-dasharray="2.200 1.600"/>
<circle cx="2016.8" cy="80.6" r="23.500" fill="#3f7b5e"/>
<g fill="#1f2a24"><path d="M1999.8 88.6l4-17 2-2 2 4 2 13 2-20 2-3 3 3 2 20 3-14 2-2 2 3 4 15z"/></g>
<g fill="#3f7b5e"><path d="M2001.3 88.1l3.500-14 1.500-1 1.500 3 1.500 12z"/><path d="M2011.8 88.1l1.800-17 1.800-2.500 2.200 2.500 1.800 17z"/><path d="M2021.8 88.1l2.700-11 1.500-1.500 1.500 2 3 10.500z"/></g>
<ellipse cx="2017.8" cy="93.6" rx="19" ry="3.200" fill="none" stroke="#1f2a24" stroke-width="1.600"/>
<text x="2016.8" y="103.1" font-family="Liberation Sans,sans-serif" font-size="3" fill="#1f2a24" text-anchor="middle">2002</text>
<text font-family="'Noto Serif CJK SC',serif" font-weight="700" font-size="10.500" fill="#3f7b5e" letter-spacing="5.500"><textPath href="#arcT" startOffset="50%" text-anchor="middle">張家界学院</textPath></text>
<text font-family="'Liberation Sans',sans-serif" font-weight="700" font-size="7" fill="#3f7b5e" letter-spacing="1.700"><textPath href="#arcB" startOffset="50%" text-anchor="middle">ZHANGJIAJIE COLLEGE</textPath></text>
<text x="2078.0" y="0.0" font-family="'Noto Serif CJK SC',serif" font-weight="700" font-size="52" fill="#3f7b5e" letter-spacing="7.600" transform="translate(0 94.0) scale(1 1.220)">張家界学院</text>
<text x="2083.5" y="121.5" font-family="'Liberation Sans',sans-serif" font-weight="700" font-size="16" fill="#3f7b5e" textLength="281" lengthAdjust="spacing">ZHANGJIAJIE COLLEGE</text>
</svg>
<div id="panel">
<div class="pt" style="left:20px;color:#9d9d9d;font-size:11px;letter-spacing:0.000px;">问题</div>
<div class="pt" style="left:84px;color:#9d9d9d;font-size:11px;letter-spacing:0.000px;">输出</div>
<div class="pt" style="left:130px;color:#9d9d9d;font-size:11px;letter-spacing:0.000px;">调试控制台</div>
<div class="pt" style="left:208.5px;color:#ccc;font-size:11px;letter-spacing:0.000px;">终端</div>
<div class="pt" style="left:255px;color:#9d9d9d;font-size:11px;letter-spacing:0.000px;">端口</div>
<div class="badge" style="left:46px;top:8px;font-size:10px;font-weight:normal;width:17px;height:17px;border-radius:9px;line-height:17px">6</div>
<div class="abs" style="left:207px;top:28px;width:26px;height:1px;background:#0078d4"></div>
<svg class="abs" style="left:2006px;top:9px" width="16" height="16" viewBox="0 0 16 16" fill="none" stroke="#ccc" stroke-width="1.1" stroke-linecap="round" stroke-linejoin="round" ><rect x="1.500" y="2.500" width="13" height="11" rx="1.500"/><path d="M8 2.500v11"/></svg>
<svg class="abs" style="left:2023px;top:12px" width="11" height="11" viewBox="0 0 16 16" fill="none" stroke="#ccc" stroke-width="1.3" stroke-linecap="round" stroke-linejoin="round" ><path d="M3.300 5.900l4.700 4.700 4.700-4.700"/></svg>
<svg class="abs" style="left:2044px;top:9px" width="16" height="16" viewBox="0 0 16 16" fill="none" stroke="#ccc" stroke-width="1" stroke-linecap="round" stroke-linejoin="round" color="#ccc"><circle cx="3.500" cy="8" r="1" fill="currentColor" stroke="none"/><circle cx="8" cy="8" r="1" fill="currentColor" stroke="none"/><circle cx="12.500" cy="8" r="1" fill="currentColor" stroke="none"/></svg>
<div class="abs" style="left:2071px;top:10px;width:1px;height:16px;background:#5a5a5a"></div>
<svg class="abs" style="left:2082px;top:9px" width="16" height="16" viewBox="0 0 16 16" fill="none" stroke="#ccc" stroke-width="1.2" stroke-linecap="round" stroke-linejoin="round" ><path d="M2.500 6V3.500a1 1 0 0 1 1-1H6M10 2.500h2.500a1 1 0 0 1 1 1V6M13.500 10v2.500a1 1 0 0 1-1 1H10M6 13.500H3.500a1 1 0 0 1-1-1V10"/></svg>
<svg class="abs" style="left:2109px;top:9px" width="16" height="16" viewBox="0 0 16 16" fill="none" stroke="#ccc" stroke-width="1.1" stroke-linecap="round" stroke-linejoin="round" ><path d="M3.500 3.500l9 9M12.500 3.500l-9 9"/></svg>
<svg class="abs" style="left:6px;top:40px" width="10" height="10" viewBox="0 0 10 10" fill="none" stroke="#f14c4c" stroke-width="1"><circle cx="5" cy="5" r="3.800"/><path d="M3.500 3.500l3 3M6.500 3.500l-3 3"/></svg>
<div class="term" style="top:37px;margin-top:1px"><b style="color:#23d18b">liu@WP</b>:<b style="color:#3b8eea">~/SM_n</b>$ cd /home/liu/SM_n/build &amp;&amp; timeout 15s ./sm_mqtt_client test test</div>
<div class="term" style="top:54px">=== <span class="cj">国密</span>MQTT<span class="cj">客户端</span> ===</div>
<div class="term" style="top:71px"><span class="cj">用户名</span>: test</div>
<div class="term" style="top:88px"><span class="cj">密码</span>: test</div>
<div class="term" style="top:105px">====================</div>
<div class="term" style="top:122px"><span class="cj">正在创建国密</span>SSL<span class="cj">上下文</span>...</div>
<div class="term" style="top:139px"><span class="cj">初始化</span>SSL<span class="cj">库</span>...</div>
<div class="term" style="top:156px"><span class="cj">使用国密</span>TLS<span class="cj">方法创建</span>SSL<span class="cj">上下文</span>...</div>
<div class="term" style="top:173px"><span class="cj">创建</span>SSL<span class="cj">上下文</span>...</div>
<div class="term" style="top:190px"><span class="cj">设置国密密码套件</span>...</div>
<div class="term" style="top:207px"><span class="cj">启用国密双证书模式</span>...</div>
<div class="term" style="top:224px"><span class="cj">加载</span>CA<span class="cj">证书</span>: ./CA/rootcasm2.cer</div>
<div class="term" style="top:241px"><span class="cj">加载签名证书</span>: ./CA/client.cer</div>
<div class="term" style="top:258px"><span class="cj">加载签名私钥</span>: ./CA/client.key</div>
<div class="term" style="top:275px"><span class="cj">加载加密证书</span>: ./CA/client_en.cer</div>
<div class="term" style="top:292px"><span class="cj">加载加密私钥</span>: ./CA/client_en.key</div>
<div class="term" style="top:309px"><span class="cj">成功创建国密</span>SSL<span class="cj">上下文</span></div>
<div class="term" style="top:326px"><span class="cj">国密</span>SSL<span class="cj">上下文创建成功</span></div>
<div class="term" style="top:343px"><span class="cj">正在创建</span>MQTT<span class="cj">客户端</span>...</div>
<div class="term" style="top:360px"><span class="cj">初始化</span>MQTT<span class="cj">客户端</span>...</div>
<div class="term" style="top:377px">Broker<span class="cj">地址</span>: ssl://106.14.248.110:17884</div>
<div class="term" style="top:394px"><span class="cj">客户端</span>ID: GM_MQTT_Client</div>
<div class="term" style="top:411px"><span class="cj">调用</span>MQTTClient_create...</div>
<div class="term" style="top:428px">MQTTClient_create<span class="cj">返回值</span>: 0</div>
<div class="term" style="top:445px">MQTT<span class="cj">客户端创建成功</span></div>
<div class="term" style="top:462px"><span class="cj">设置回调函数</span>...</div>
<div class="term" style="top:479px"><span class="cj">回调函数设置成功</span></div>
<div class="term" style="top:496px"><span class="cj">正在连接</span>MQTT<span class="cj">服务器</span>...</div>
<div class="term" style="top:513px"><span class="cj">正在连接</span>MQTT<span class="cj">服务器</span>...</div>
<div class="term" style="top:530px"><span class="cj">用户名</span>: test</div>
<div class="term" style="top:547px">MQTT<span class="cj">连接失败</span>, <span class="cj">错误码</span>: -8 (Bad structure)</div>
<div class="abs" style="left:2006px;top:37px;width:14px;height:524px;border-left:1px solid #0c0c0c;border-top:1px solid #0c0c0c"></div>
<div class="abs" style="left:2016px;top:37px;width:4px;height:6px;background:#f14c4c"></div>
<div class="abs" style="left:2007px;top:544px;width:4px;height:12px;background:#5a5a5a"></div>
<div class="abs" style="left:2020px;top:34px;width:1px;height:530px;background:#2b2b2b"></div>
<svg class="abs" style="left:2031px;top:37px" width="16" height="16" viewBox="0 0 16 16" fill="none" stroke="#ccc" stroke-width="1.1" stroke-linecap="round" stroke-linejoin="round" ><rect x="1.500" y="2.500" width="13" height="11" rx="1.500"/><path d="M4 6l2.500 2L4 10M8 10.500h3.500"/></svg>
<div class="abs" style="left:2050px;top:35px;line-height:22px;font-size:13px;color:#ccc;white-space:nowrap;font-size:13px;letter-spacing:0.143px;">Lingma Ag...</div>
<svg class="abs" style="left:2031px;top:59px" width="16" height="16" viewBox="0 0 16 16" fill="none" stroke="#ccc" stroke-width="1.1" stroke-linecap="round" stroke-linejoin="round" ><rect x="1.500" y="2.500" width="13" height="11" rx="1.500"/><path d="M4 6l2.500 2L4 10M8 10.500h3.500"/></svg>
<div class="abs" style="left:2050px;top:57px;line-height:22px;font-size:13px;color:#ccc;white-space:nowrap;font-size:13px;letter-spacing:0.143px;">Lingma Ag...</div>
<div class="abs" style="left:2021px;top:78px;width:119px;height:22px;background:#37373d"></div>
<div class="abs" style="left:2021px;top:78px;width:1px;height:22px;background:#0078d4"></div>
<svg class="abs" style="left:2031px;top:81px" width="16" height="16" viewBox="0 0 16 16" fill="none" stroke="#ccc" stroke-width="1.1" stroke-linecap="round" stroke-linejoin="round" ><rect x="1.500" y="2.500" width="13" height="11" rx="1.500"/><path d="M4 6l2.500 2L4 10M8 10.500h3.500"/></svg>
<div class="abs" style="left:2050px;top:79px;line-height:22px;font-size:13px;color:#ccc;white-space:nowrap;font-size:13px;letter-spacing:0.143px;">Lingma Ag...</div>
<svg class="abs" style="left:2031px;top:103px" width="16" height="16" viewBox="0 0 16 16" fill="none" stroke="#ccc" stroke-width="1.1" stroke-linecap="round" stroke-linejoin="round" ><rect x="1.500" y="2.500" width="13" height="11" rx="1.500"/><path d="M4 6l2.500 2L4 10M8 10.500h3.500"/></svg>
<div class="abs" style="left:2050px;top:101px;line-height:22px;font-size:13px;color:#ccc;white-space:nowrap;font-size:13px;letter-spacing:0.143px;">Lingma Ag...</div>
</div>
<div id="status">
<svg class="abs" style="left:10px;top:3px" width="16" height="16" viewBox="0 0 16 16" fill="none" stroke="#ccc" stroke-width="1.2" stroke-linecap="round" stroke-linejoin="round" ><path d="M2.500 7.500l3.200 3.200-3.200 3.200M12.500 2.500L9.300 5.700l3.200 3.200" /></svg>
<svg class="abs" style="left:40px;top:3px" width="15" height="15" viewBox="0 0 16 16" fill="none" stroke="#ccc" stroke-width="1.1" stroke-linecap="round" stroke-linejoin="round" ><circle cx="8" cy="8" r="6.300"/><path d="M5.700 5.700l4.600 4.600M10.300 5.700l-4.600 4.600"/></svg>
<div class="s" style="left:58.69999999999999px;font-size:12px;letter-spacing:-0.188px;">6</div>
<svg class="abs" style="left:69px;top:3px" width="15" height="15" viewBox="0 0 16 16" fill="none" stroke="#ccc" stroke-width="1.1" stroke-linecap="round" stroke-linejoin="round" ><path d="M8 2L14.500 13.500h-13z"/><path d="M8 6.500v3.500M8 11.700v.3"/></svg>
<div class="s" style="left:87px;font-size:12px;letter-spacing:-0.188px;">0</div>
<svg class="abs" style="left:110px;top:3px" width="15" height="15" viewBox="0 0 16 16" fill="none" stroke="#ccc" stroke-width="1.1" stroke-linecap="round" stroke-linejoin="round" ><circle cx="8" cy="8" r="2"/><path d="M6.800 1.500h2.400l.4 1.800 1.200.7 1.700-.6 1.200 2.100-1.300 1.200v1.400l1.300 1.200-1.200 2.100-1.700-.6-1.200.7-.4 1.800H6.800l-.4-1.800-1.200-.7-1.700.6-1.200-2.100 1.300-1.200V7.300L2.300 6.100l1.200-2.100 1.700.6 1.200-.7z"/></svg>
<div class="s" style="left:129px;font-size:12px;letter-spacing:-0.008px;top:1px;">生成</div>
<svg class="abs" style="left:169px;top:3px" width="16" height="16" viewBox="0 0 16 16" fill="none" stroke="#ccc" stroke-width="1.1" stroke-linecap="round" stroke-linejoin="round" ><ellipse cx="8" cy="9" rx="3" ry="4"/><path d="M6 5.500a2 2 0 0 1 4 0M5 9H2M14 9h-3M5.300 6.500L3 4.500M10.700 6.500L13 4.500M5.300 11.500L3 13.500M10.700 11.500L13 13.500"/></svg>
<svg class="abs" style="left:201px;top:3px" width="16" height="16" viewBox="0 0 16 16" fill="none" stroke="#ccc" stroke-width="1.1" stroke-linecap="round" stroke-linejoin="round" ><path d="M4 2.500v11l9-5.500z"/></svg>
<div class="s" style="left:2009px;font-size:12px;letter-spacing:-0.147px;top:1px;">行 1，列 1</div>
<div class="s" style="left:2080px;font-size:12px;letter-spacing:-0.169px;top:1px;">空格: 4</div>
<div class="s" style="left:2132.5px;font-size:12px;letter-spacing:-0.400px;">UTF-8</div>
<div class="s" style="left:2180.5px;font-size:12px;letter-spacing:-0.508px;">LF</div>
<div class="s" style="left:2210.5px;font-size:12px;letter-spacing:0.714px;">{ }</div>
<div class="s" style="left:2231px;font-size:12px;letter-spacing:-0.562px;">C++</div>
<div class="abs" style="left:2260px;top:0;width:119px;height:21px;background:#3a3d41"></div>
<svg class="abs" style="left:2267px;top:3px" width="16" height="16" viewBox="0 0 16 16" fill="none" stroke="#ccc" stroke-width="1.2" stroke-linecap="round" stroke-linejoin="round" ><path d="M3 6.500a2.500 2.500 0 0 1 5 0M8 6.500a2.500 2.500 0 0 1 5 0M2.500 7v4.500c1.500 1.500 4 2 5.500 2M13.500 7v2"/><circle cx="12" cy="12" r="3" fill="#ccc" stroke="none"/></svg>
<div class="s" style="left:2287.5px;font-size:12px;letter-spacing:-0.074px;top:1px;">已达到聊天配额</div>
<svg class="abs" style="left:2387px;top:3px" width="16" height="16" viewBox="0 0 16 16" fill="none" stroke="#ccc" stroke-width="1.2" stroke-linecap="round" stroke-linejoin="round" ><path d="M3 5l3-2.500h5.500L9 5zM3 5l2.500 3L3 11.500l3 2h5.500l2-3.500-2.500-2.500 2.500-2.500M5.500 8h6"/></svg>
<div class="s" style="left:2419px;font-size:12px;letter-spacing:-0.037px;">Linux</div>
<svg class="abs" style="left:2465px;top:3px" width="16" height="16" viewBox="0 0 16 16" fill="none" stroke="#ccc" stroke-width="1.1" stroke-linecap="round" stroke-linejoin="round" ><path d="M8 1.800a4 4 0 0 0-4 4v3l-1.300 2.700h10.600L12 8.800v-3a4 4 0 0 0-4-4zM6.500 13.500a1.500 1.500 0 0 0 3 0"/></svg>
</div>
</div>
</div></body></html>
